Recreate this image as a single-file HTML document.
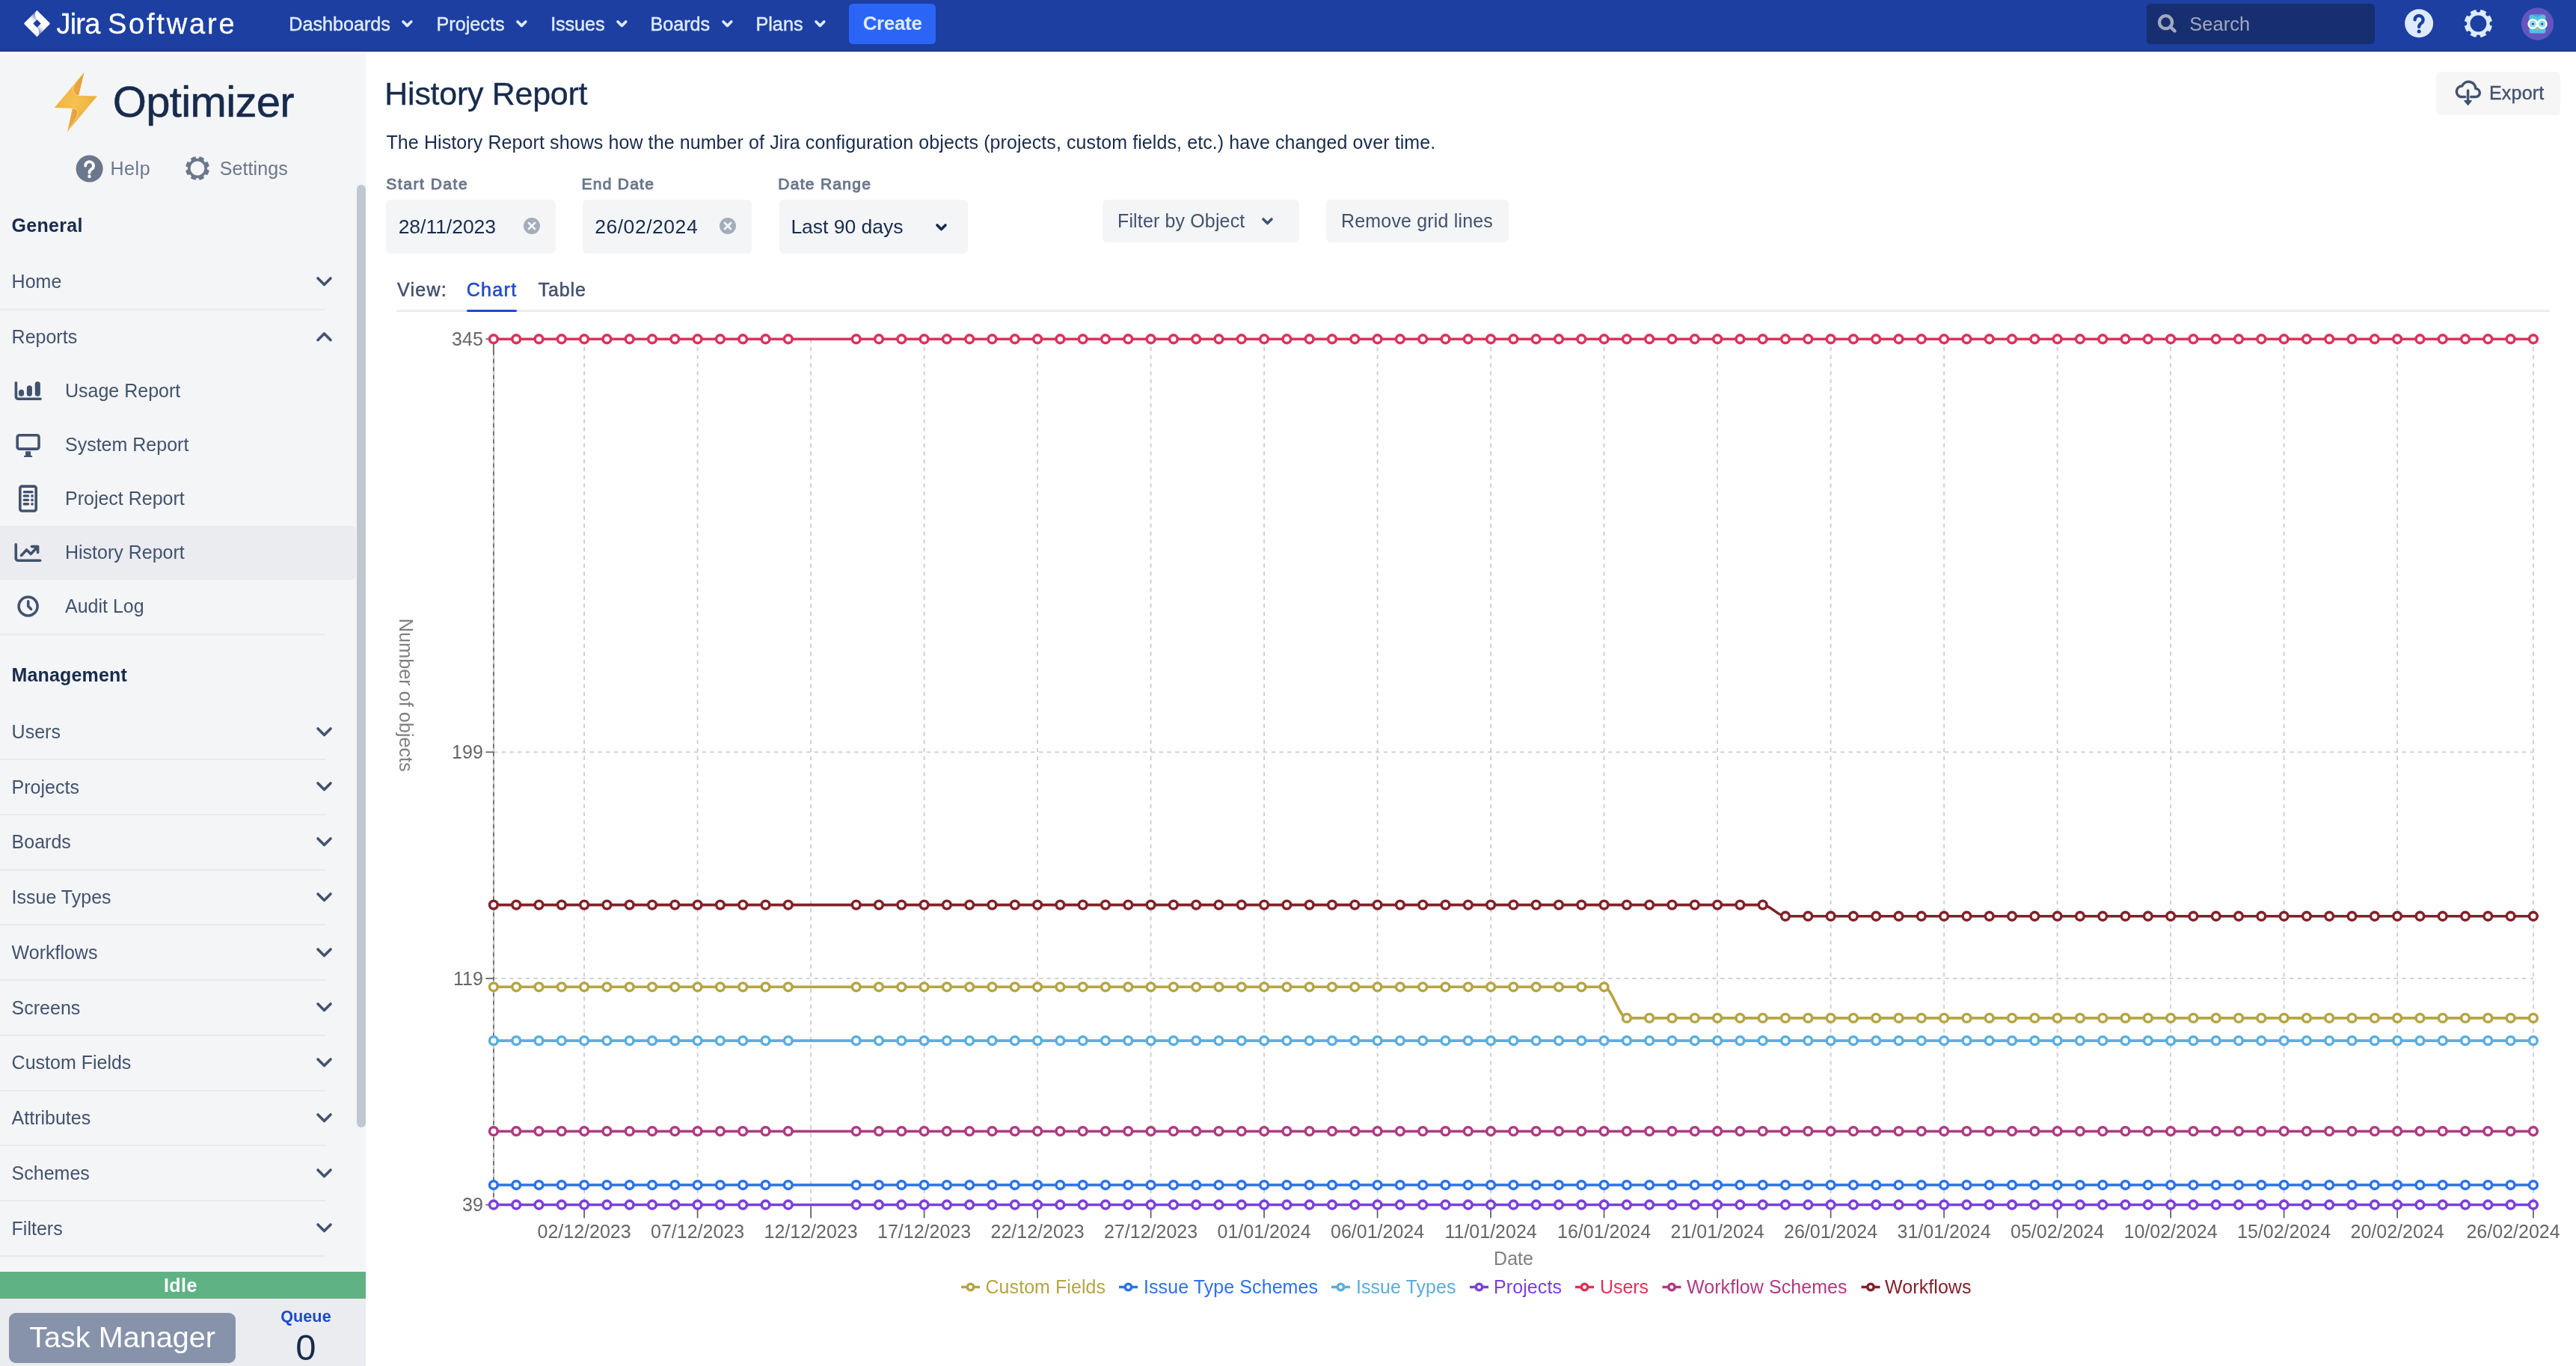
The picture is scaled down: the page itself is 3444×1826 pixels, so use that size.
<!DOCTYPE html>
<html lang="en"><head><meta charset="utf-8"><title>History Report - Optimizer - Jira</title>
<style>
html,body{margin:0;padding:0;background:#fff;}
body{width:3444px;height:1826px;overflow:hidden;position:relative;font-family:"Liberation Sans",Arial,Helvetica,sans-serif;}
#root{position:absolute;left:0;top:0;width:3444px;height:1826px;will-change:transform;}
.t{position:absolute;white-space:nowrap;}
.b{position:absolute;display:block;}
svg text{font-family:"Liberation Sans",Arial,Helvetica,sans-serif;}
</style></head><body><div id="root">
<div class="b" style="left:0px;top:0px;width:3444px;height:68px;background:#1c3fa1;"></div>
<div class="b" style="left:0px;top:68px;width:3444px;height:1px;background:#1b2a58;"></div>
<div class="b" style="left:0px;top:70px;width:489px;height:1756px;background:#f4f5f7;"></div>
<svg class="b" style="left:24px;top:6px;" width="52" height="52" viewBox="0 0 52 52">
<defs>
<linearGradient id="jg1" x1="16.6" y1="9.5" x2="11.6" y2="14.6" gradientUnits="userSpaceOnUse"><stop offset="0.1" stop-color="#1c3fa1" stop-opacity="0.55"/><stop offset="1" stop-color="#ffffff" stop-opacity="0"/></linearGradient>
<linearGradient id="jg2" x1="17.1" y1="22.2" x2="22.1" y2="17.2" gradientUnits="userSpaceOnUse"><stop offset="0.1" stop-color="#1c3fa1" stop-opacity="0.55"/><stop offset="1" stop-color="#ffffff" stop-opacity="0"/></linearGradient>
</defs>
<g transform="translate(25.5 25.5) scale(1.5) translate(-16.815 -15.88)">
<path d="M28.0313 15.2158L17.8063 4.99084L16.815 4L9.11812 11.6968L5.59877 15.2158C5.23194 15.5832 5.23194 16.1779 5.59877 16.5453L12.6307 23.5772L16.815 27.7611L24.5118 20.0643L24.631 19.9451L28.0313 16.5453C28.3981 16.1779 28.3981 15.5832 28.0313 15.2158ZM16.815 19.3931L13.3023 15.8806L16.815 12.368L20.3277 15.8806L16.815 19.3931Z" fill="#ffffff"/>
<path d="M16.815 12.368C14.5152 10.0679 14.504 6.34252 16.7899 4.02905L9.10303 11.7131L13.2869 15.897L16.815 12.368Z" fill="url(#jg1)"/>
<path d="M20.3371 15.8711L16.815 19.3931C17.9251 20.5026 18.5488 22.0078 18.5488 23.5773C18.5488 25.1468 17.9251 26.652 16.815 27.7614L24.5207 20.0557L20.3371 15.8711Z" fill="url(#jg2)"/>
</g></svg>
<div class="t " style="left:75.43px;top:8.83px;font-size:38px;line-height:46px;color:#ffffff;font-weight:400;letter-spacing:-0.770px;-webkit-text-stroke:0.3px #fff;">Jira</div>
<div class="t " style="left:143.89px;top:8.83px;font-size:38px;line-height:46px;color:#ffffff;font-weight:400;letter-spacing:2.817px;-webkit-text-stroke:0.3px #fff;">Software</div>
<div class="t " style="left:386.28px;top:17.27px;font-size:25.2px;line-height:30px;color:#deebff;font-weight:400;letter-spacing:-0.014px;-webkit-text-stroke:0.45px #deebff;">Dashboards</div>
<svg class="b" style="left:535.45px;top:25.0px;" width="18.8" height="13.4" viewBox="0 0 18.8 13.4"><path d="M4 4 L9.4 9.4 L14.8 4" fill="none" stroke="#deebff" stroke-width="3.7" stroke-linecap="round" stroke-linejoin="round"/></svg>
<div class="t " style="left:583.38px;top:17.27px;font-size:25.2px;line-height:30px;color:#deebff;font-weight:400;letter-spacing:0.032px;-webkit-text-stroke:0.45px #deebff;">Projects</div>
<svg class="b" style="left:687.95px;top:25.0px;" width="18.8" height="13.4" viewBox="0 0 18.8 13.4"><path d="M4 4 L9.4 9.4 L14.8 4" fill="none" stroke="#deebff" stroke-width="3.7" stroke-linecap="round" stroke-linejoin="round"/></svg>
<div class="t " style="left:736.13px;top:17.27px;font-size:25.2px;line-height:30px;color:#deebff;font-weight:400;letter-spacing:-0.076px;-webkit-text-stroke:0.45px #deebff;">Issues</div>
<svg class="b" style="left:822.25px;top:25.0px;" width="18.8" height="13.4" viewBox="0 0 18.8 13.4"><path d="M4 4 L9.4 9.4 L14.8 4" fill="none" stroke="#deebff" stroke-width="3.7" stroke-linecap="round" stroke-linejoin="round"/></svg>
<div class="t " style="left:869.38px;top:17.27px;font-size:25.2px;line-height:30px;color:#deebff;font-weight:400;letter-spacing:-0.017px;-webkit-text-stroke:0.45px #deebff;">Boards</div>
<svg class="b" style="left:963.0000000000001px;top:25.0px;" width="18.8" height="13.4" viewBox="0 0 18.8 13.4"><path d="M4 4 L9.4 9.4 L14.8 4" fill="none" stroke="#deebff" stroke-width="3.7" stroke-linecap="round" stroke-linejoin="round"/></svg>
<div class="t " style="left:1010.38px;top:17.27px;font-size:25.2px;line-height:30px;color:#deebff;font-weight:400;letter-spacing:0.050px;-webkit-text-stroke:0.45px #deebff;">Plans</div>
<svg class="b" style="left:1087.35px;top:25.0px;" width="18.8" height="13.4" viewBox="0 0 18.8 13.4"><path d="M4 4 L9.4 9.4 L14.8 4" fill="none" stroke="#deebff" stroke-width="3.7" stroke-linecap="round" stroke-linejoin="round"/></svg>
<div class="b" style="left:1135px;top:4.8px;width:116px;height:54.2px;background:#2b65f5;border-radius:5.5px;"></div>
<div class="t " style="left:1153.66px;top:15.79px;font-size:26px;line-height:31px;color:#deebff;font-weight:700;letter-spacing:-0.348px;">Create</div>
<div class="b" style="left:2870px;top:4.8px;width:305px;height:54.2px;background:#172e70;border-radius:5.5px;"></div>
<svg class="b" style="left:2882px;top:16px;" width="32" height="32" viewBox="0 0 32 32"><circle cx="13.5" cy="13.7" r="8.5" fill="none" stroke="#a0a9bf" stroke-width="4.3"/><path d="M19.8 20 L25.5 25.4" stroke="#a0a9bf" stroke-width="4.4" stroke-linecap="round"/></svg>
<div class="t " style="left:2927.16px;top:16.50px;font-size:25.4px;line-height:30px;color:#a0a9bf;font-weight:400;letter-spacing:0.101px;">Search</div>
<svg class="b" style="left:3212px;top:9px;" width="44" height="44" viewBox="0 0 44 44"><circle cx="22.1" cy="22.3" r="19" fill="#deebff"/><path d="M16.6 17.4 a5.5 5.5 0 1 1 8.5 4.6 c-2.2 1.5 -3 2.4 -3 4.9" fill="none" stroke="#1c3fa1" stroke-width="4.3" stroke-linecap="round"/><circle cx="22.1" cy="33" r="2.5" fill="#1c3fa1"/></svg>
<svg class="b" style="left:3290px;top:8px;" width="48" height="48" viewBox="0 0 48 48"><circle cx="23.4" cy="23.5" r="14.8" fill="none" stroke="#deebff" stroke-width="7.799999999999999"/><path d="M23.40 0.80 L23.40 5.50 M39.45 7.45 L36.13 10.77 M46.10 23.50 L41.40 23.50 M39.45 39.55 L36.13 36.23 M23.40 46.20 L23.40 41.50 M7.35 39.55 L10.67 36.23 M0.70 23.50 L5.40 23.50 M7.35 7.45 L10.67 10.77 " stroke="#1c3fa1" stroke-width="5.8" stroke-linecap="round" fill="none"/></svg>
<svg class="b" style="left:3368px;top:8px;" width="48" height="48" viewBox="0 0 48 48"><circle cx="24.5" cy="24" r="21.7" fill="#6554c0"/>
<path d="M13.6 13 l3 -1.6 h15.8 l3 1.6 v20.5 a3 3 0 0 1 -3 3 h-15.8 a3 3 0 0 1 -3 -3 z" fill="#4fc3e3"/>
<path d="M16.6 11.4 h15.8 l-7.9 3.4 z" fill="#3ea7c4"/>
<circle cx="18.3" cy="24" r="7" fill="#fff"/><circle cx="30.7" cy="24" r="7" fill="#fff"/>
<circle cx="18.3" cy="24" r="4.5" fill="#8ddcf0"/><circle cx="30.7" cy="24" r="4.5" fill="#8ddcf0"/>
<circle cx="18.3" cy="24" r="1.5" fill="#344a7c"/><circle cx="30.7" cy="24" r="1.5" fill="#344a7c"/>
<path d="M22.2 28.4 h4.6 l-2.3 4.6 z" fill="#f6a83b"/></svg>
<svg class="b" style="left:68px;top:92px;" width="70" height="90" viewBox="0 0 70 90"><defs><radialGradient id="bg1" cx="31.5" cy="44.2" r="34" gradientUnits="userSpaceOnUse"><stop offset="0" stop-color="#f6c350"/><stop offset="0.6" stop-color="#f1b545"/><stop offset="1" stop-color="#eaa83f"/></radialGradient>
<linearGradient id="bg2" x1="0" y1="0" x2="1" y2="0"><stop offset="0" stop-color="#ebac45"/><stop offset="1" stop-color="#e49c38"/></linearGradient></defs>
<path d="M44.3 5.1 L4.8 51.9 L29 52.7 L22.4 83.8 L61.9 36.6 L37 35.8 Z" fill="url(#bg1)"/>
<path d="M44.3 5.1 C37 14 29.5 21 29.3 27.4 C29.3 32 32.5 35.5 37 35.8 Z" fill="url(#bg2)"/>
<path d="M29 52.7 C33 53 36 56 35.9 58.2 C35.8 64 30 72 22.4 83.8 Z" fill="url(#bg2)"/>
<path d="M43 6.8 C37 14 29.5 21 29.3 27.4 C29.3 32 32.5 35.5 37 35.8 M29 52.7 C33 53 36 56 35.9 58.2 C35.8 64 30 72 24 81.5" fill="none" stroke="#fbe29a" stroke-width="0.8"/></svg>
<div class="t " style="left:150.79px;top:101.10px;font-size:58px;line-height:70px;color:#172b4d;font-weight:400;letter-spacing:-0.657px;-webkit-text-stroke:0.55px currentColor;">Optimizer</div>
<svg class="b" style="left:98px;top:204px;" width="44" height="44" viewBox="0 0 44 44"><circle cx="21.6" cy="21.5" r="18" fill="#6b778c"/><path d="M16.2 17.6 a5.4 5.4 0 1 1 8.2 4.6 c-2.1 1.4 -2.9 2.3 -2.9 4.6" fill="none" stroke="#fff" stroke-width="3.8" stroke-linecap="round"/><circle cx="21.5" cy="31.7" r="2.3" fill="#fff"/></svg>
<div class="t " style="left:147.40px;top:210.04px;font-size:25px;line-height:30px;color:#6b778c;font-weight:400;letter-spacing:0.575px;">Help</div>
<svg class="b" style="left:240px;top:201px;" width="48" height="48" viewBox="0 0 48 48"><circle cx="24" cy="24" r="12.7" fill="none" stroke="#6b778c" stroke-width="6.6"/><path d="M24.00 4.00 L24.00 8.60 M38.14 9.86 L34.89 13.11 M44.00 24.00 L39.40 24.00 M38.14 38.14 L34.89 34.89 M24.00 44.00 L24.00 39.40 M9.86 38.14 L13.11 34.89 M4.00 24.00 L8.60 24.00 M9.86 9.86 L13.11 13.11 " stroke="#f4f5f7" stroke-width="5" stroke-linecap="round" fill="none"/></svg>
<div class="t " style="left:293.68px;top:210.04px;font-size:25px;line-height:30px;color:#6b778c;font-weight:400;letter-spacing:0.104px;">Settings</div>
<div class="b" style="left:477px;top:247px;width:12px;height:1259.5px;background:#c1c7d0;border-radius:6px;"></div>
<div class="t " style="left:15.40px;top:286.34px;font-size:25px;line-height:30px;color:#172b4d;font-weight:700;letter-spacing:0.321px;">General</div>
<div class="t " style="left:15.40px;top:886.84px;font-size:25px;line-height:30px;color:#172b4d;font-weight:700;letter-spacing:0.178px;">Management</div>
<div class="t " style="left:15.60px;top:361.34px;font-size:25px;line-height:30px;color:#42526e;font-weight:400;">Home</div>
<svg class="b" style="left:420.5px;top:368.05px;" width="25" height="16.5" viewBox="0 0 25 16.5"><path d="M4 4 L12.5 12.5 L21 4" fill="none" stroke="#42526e" stroke-width="3.6" stroke-linecap="round" stroke-linejoin="round"/></svg>
<div class="b" style="left:0px;top:413px;width:434.5px;height:2px;background:#e9eaee;"></div>
<div class="t " style="left:15.60px;top:435.34px;font-size:25px;line-height:30px;color:#42526e;font-weight:400;">Reports</div>
<svg class="b" style="left:420.5px;top:442.05px;" width="25" height="16.5" viewBox="0 0 25 16.5"><path d="M4 12.5 L12.5 4 L21 12.5" fill="none" stroke="#42526e" stroke-width="3.6" stroke-linecap="round" stroke-linejoin="round"/></svg>
<div class="b" style="left:0px;top:703px;width:476px;height:72px;background:#ebecf0;border-radius:0 6px 6px 0;"></div>
<div class="t " style="left:87.00px;top:507.34px;font-size:25px;line-height:30px;color:#42526e;font-weight:400;">Usage Report</div>
<div class="t " style="left:87.00px;top:579.34px;font-size:25px;line-height:30px;color:#42526e;font-weight:400;">System Report</div>
<div class="t " style="left:87.00px;top:651.34px;font-size:25px;line-height:30px;color:#42526e;font-weight:400;">Project Report</div>
<div class="t " style="left:87.00px;top:723.34px;font-size:25px;line-height:30px;color:#42526e;font-weight:400;">History Report</div>
<div class="t " style="left:87.00px;top:795.34px;font-size:25px;line-height:30px;color:#42526e;font-weight:400;">Audit Log</div>
<svg class="b" style="left:14px;top:504px;" width="50" height="38" viewBox="0 0 50 38"><path d="M7.4 7.7 V26.3 a3 3 0 0 0 3 3 H40" fill="none" stroke="#42526e" stroke-width="3.6" stroke-linecap="round" stroke-linejoin="round"/><path d="M14.5 20.35 V22.25 M25.4 14.75 V22.25 M36.3 9.45 V22.25" fill="none" stroke="#42526e" stroke-width="7.1" stroke-linecap="round"/></svg>
<svg class="b" style="left:14px;top:574px;" width="50" height="42" viewBox="0 0 50 42"><rect x="9.2" y="7.8" width="28.8" height="18.3" rx="2.6" fill="none" stroke="#42526e" stroke-width="3.6" stroke-linecap="round" stroke-linejoin="round"/><path d="M20.1 29.3 h7 v5.6 h2 v2.1 h-11 v-2.1 h2 z" fill="#42526e"/></svg>
<svg class="b" style="left:14px;top:642px;" width="50" height="48" viewBox="0 0 50 48"><rect x="12.8" y="8.1" width="21.4" height="32.9" rx="2.6" fill="none" stroke="#42526e" stroke-width="3.6" stroke-linecap="round" stroke-linejoin="round"/><path d="M18.3 15.6 H29 M18.3 20.9 H23.5 M18.3 26.4 H23.5 M18.3 31.8 H23.5" stroke="#42526e" stroke-width="3.4" stroke-linecap="round" fill="none"/><circle cx="29" cy="20.9" r="1.85" fill="#42526e"/><circle cx="29" cy="26.4" r="1.85" fill="#42526e"/><circle cx="29" cy="31.8" r="1.85" fill="#42526e"/></svg>
<svg class="b" style="left:14px;top:720px;" width="50" height="38" viewBox="0 0 50 38"><path d="M7.25 7.8 V26.3 a3 3 0 0 0 3 3 H39.7" fill="none" stroke="#42526e" stroke-width="3.6" stroke-linecap="round" stroke-linejoin="round"/><path d="M14.5 22.4 L21.5 15 L27.2 20.5 L36 11.3 M28.5 10.6 H36.6 V18.5" fill="none" stroke="#42526e" stroke-width="3.6" stroke-linecap="round" stroke-linejoin="round"/></svg>
<svg class="b" style="left:14px;top:790px;" width="50" height="40" viewBox="0 0 50 40"><circle cx="23.6" cy="20.5" r="12.5" fill="none" stroke="#42526e" stroke-width="3.6" stroke-linecap="round" stroke-linejoin="round"/><path d="M23.7 13.8 V20.3 L27.6 24.3" fill="none" stroke="#42526e" stroke-width="3.6" stroke-linecap="round" stroke-linejoin="round"/></svg>
<div class="b" style="left:0px;top:846.5px;width:434.5px;height:2.0px;background:#e9eaee;"></div>
<div class="t " style="left:15.60px;top:962.84px;font-size:25px;line-height:30px;color:#42526e;font-weight:400;">Users</div>
<svg class="b" style="left:420.5px;top:969.65px;" width="25" height="16.5" viewBox="0 0 25 16.5"><path d="M4 4 L12.5 12.5 L21 4" fill="none" stroke="#42526e" stroke-width="3.6" stroke-linecap="round" stroke-linejoin="round"/></svg>
<div class="b" style="left:0px;top:1014.0px;width:434.5px;height:2.0px;background:#e9eaee;"></div>
<div class="t " style="left:15.60px;top:1036.59px;font-size:25px;line-height:30px;color:#42526e;font-weight:400;">Projects</div>
<svg class="b" style="left:420.5px;top:1043.4px;" width="25" height="16.5" viewBox="0 0 25 16.5"><path d="M4 4 L12.5 12.5 L21 4" fill="none" stroke="#42526e" stroke-width="3.6" stroke-linecap="round" stroke-linejoin="round"/></svg>
<div class="b" style="left:0px;top:1087.75px;width:434.5px;height:2.0px;background:#e9eaee;"></div>
<div class="t " style="left:15.60px;top:1110.34px;font-size:25px;line-height:30px;color:#42526e;font-weight:400;">Boards</div>
<svg class="b" style="left:420.5px;top:1117.15px;" width="25" height="16.5" viewBox="0 0 25 16.5"><path d="M4 4 L12.5 12.5 L21 4" fill="none" stroke="#42526e" stroke-width="3.6" stroke-linecap="round" stroke-linejoin="round"/></svg>
<div class="b" style="left:0px;top:1161.5px;width:434.5px;height:2.0px;background:#e9eaee;"></div>
<div class="t " style="left:15.60px;top:1184.09px;font-size:25px;line-height:30px;color:#42526e;font-weight:400;">Issue Types</div>
<svg class="b" style="left:420.5px;top:1190.9px;" width="25" height="16.5" viewBox="0 0 25 16.5"><path d="M4 4 L12.5 12.5 L21 4" fill="none" stroke="#42526e" stroke-width="3.6" stroke-linecap="round" stroke-linejoin="round"/></svg>
<div class="b" style="left:0px;top:1235.25px;width:434.5px;height:2.0px;background:#e9eaee;"></div>
<div class="t " style="left:15.60px;top:1257.84px;font-size:25px;line-height:30px;color:#42526e;font-weight:400;">Workflows</div>
<svg class="b" style="left:420.5px;top:1264.65px;" width="25" height="16.5" viewBox="0 0 25 16.5"><path d="M4 4 L12.5 12.5 L21 4" fill="none" stroke="#42526e" stroke-width="3.6" stroke-linecap="round" stroke-linejoin="round"/></svg>
<div class="b" style="left:0px;top:1309.0px;width:434.5px;height:2.0px;background:#e9eaee;"></div>
<div class="t " style="left:15.60px;top:1331.59px;font-size:25px;line-height:30px;color:#42526e;font-weight:400;">Screens</div>
<svg class="b" style="left:420.5px;top:1338.4px;" width="25" height="16.5" viewBox="0 0 25 16.5"><path d="M4 4 L12.5 12.5 L21 4" fill="none" stroke="#42526e" stroke-width="3.6" stroke-linecap="round" stroke-linejoin="round"/></svg>
<div class="b" style="left:0px;top:1382.75px;width:434.5px;height:2.0px;background:#e9eaee;"></div>
<div class="t " style="left:15.60px;top:1405.34px;font-size:25px;line-height:30px;color:#42526e;font-weight:400;">Custom Fields</div>
<svg class="b" style="left:420.5px;top:1412.15px;" width="25" height="16.5" viewBox="0 0 25 16.5"><path d="M4 4 L12.5 12.5 L21 4" fill="none" stroke="#42526e" stroke-width="3.6" stroke-linecap="round" stroke-linejoin="round"/></svg>
<div class="b" style="left:0px;top:1456.5px;width:434.5px;height:2.0px;background:#e9eaee;"></div>
<div class="t " style="left:15.60px;top:1479.09px;font-size:25px;line-height:30px;color:#42526e;font-weight:400;">Attributes</div>
<svg class="b" style="left:420.5px;top:1485.9px;" width="25" height="16.5" viewBox="0 0 25 16.5"><path d="M4 4 L12.5 12.5 L21 4" fill="none" stroke="#42526e" stroke-width="3.6" stroke-linecap="round" stroke-linejoin="round"/></svg>
<div class="b" style="left:0px;top:1530.25px;width:434.5px;height:2.0px;background:#e9eaee;"></div>
<div class="t " style="left:15.60px;top:1552.84px;font-size:25px;line-height:30px;color:#42526e;font-weight:400;">Schemes</div>
<svg class="b" style="left:420.5px;top:1559.65px;" width="25" height="16.5" viewBox="0 0 25 16.5"><path d="M4 4 L12.5 12.5 L21 4" fill="none" stroke="#42526e" stroke-width="3.6" stroke-linecap="round" stroke-linejoin="round"/></svg>
<div class="b" style="left:0px;top:1604.0px;width:434.5px;height:2.0px;background:#e9eaee;"></div>
<div class="t " style="left:15.60px;top:1626.59px;font-size:25px;line-height:30px;color:#42526e;font-weight:400;">Filters</div>
<svg class="b" style="left:420.5px;top:1633.4px;" width="25" height="16.5" viewBox="0 0 25 16.5"><path d="M4 4 L12.5 12.5 L21 4" fill="none" stroke="#42526e" stroke-width="3.6" stroke-linecap="round" stroke-linejoin="round"/></svg>
<div class="b" style="left:0px;top:1677.75px;width:434.5px;height:2.0px;background:#e9eaee;"></div>
<div class="b" style="left:0px;top:1699.5px;width:489px;height:36.5px;background:#5fb283;"></div>
<div class="t " style="left:218.88px;top:1702.84px;font-size:25px;line-height:30px;color:#ffffff;font-weight:700;letter-spacing:0.458px;">Idle</div>
<div class="b" style="left:0px;top:1736px;width:489px;height:90px;background:#ebecf0;"></div>
<div class="b" style="left:12px;top:1754.5px;width:302.5px;height:67.0px;background:#8793ab;border-radius:9px;"></div>
<div class="t " style="left:39.21px;top:1764.31px;font-size:39.5px;line-height:47px;color:#ffffff;font-weight:400;letter-spacing:0.057px;">Task Manager</div>
<div class="t " style="left:375.14px;top:1746.82px;font-size:21.6px;line-height:26px;color:#1c4bc9;font-weight:700;letter-spacing:0.084px;">Queue</div>
<div class="t " style="left:395.34px;top:1771.52px;font-size:49px;line-height:59px;color:#172b4d;font-weight:400;">0</div>
<div class="t " style="left:514.37px;top:99.84px;font-size:42.9px;line-height:51px;color:#172b4d;font-weight:400;letter-spacing:-0.237px;-webkit-text-stroke:0.35px currentColor;">History Report</div>
<div class="t " style="left:516.50px;top:175.34px;font-size:25px;line-height:30px;color:#172b4d;font-weight:400;letter-spacing:0.095px;">The History Report shows how the number of Jira configuration objects (projects, custom fields, etc.) have changed over time.</div>
<div class="b" style="left:3257px;top:96px;width:165.80000000000018px;height:57.69999999999999px;background:#f6f6f7;border-radius:5.5px;"></div>
<svg class="b" style="left:3276px;top:104px;" width="46" height="42" viewBox="0 0 46 42"><path d="M19.5 25.6 H13.8 A7.5 7.5 0 0 1 15.8 10.9 A9.4 9.4 0 0 1 33.8 14.6 A5.5 5.5 0 0 1 33.8 25.6 H27.7" fill="none" stroke="#42526e" stroke-width="3.5" stroke-linecap="round" stroke-linejoin="round"/><path d="M23.55 17 V32" fill="none" stroke="#42526e" stroke-width="3.5" stroke-linecap="round"/><path d="M18.8 30.6 H28.3 L23.55 36.4 Z" fill="#42526e" stroke="#42526e" stroke-width="1.2" stroke-linejoin="round"/></svg>
<div class="t " style="left:3328.00px;top:108.94px;font-size:25px;line-height:30px;color:#42526e;font-weight:400;letter-spacing:0.200px;-webkit-text-stroke:0.4px currentColor;">Export</div>
<div class="t " style="left:516.35px;top:232.82px;font-size:21px;line-height:25px;color:#6b778c;font-weight:400;letter-spacing:1.521px;-webkit-text-stroke:0.95px currentColor;">Start Date</div>
<div class="t " style="left:777.62px;top:232.82px;font-size:21px;line-height:25px;color:#6b778c;font-weight:400;letter-spacing:1.236px;-webkit-text-stroke:0.95px currentColor;">End Date</div>
<div class="t " style="left:1040.32px;top:232.82px;font-size:21px;line-height:25px;color:#6b778c;font-weight:400;letter-spacing:1.276px;-webkit-text-stroke:0.95px currentColor;">Date Range</div>
<div class="b" style="left:516px;top:267px;width:226.5px;height:71.5px;background:#f4f5f7;border-radius:6px;"></div>
<div class="b" style="left:778.5px;top:267px;width:226.5px;height:71.5px;background:#f4f5f7;border-radius:6px;"></div>
<div class="b" style="left:1042px;top:267px;width:252px;height:71.5px;background:#f4f5f7;border-radius:6px;"></div>
<div class="t " style="left:532.67px;top:286.82px;font-size:26.5px;line-height:32px;color:#172b4d;font-weight:400;letter-spacing:-0.029px;">28/11/2023</div>
<div class="t " style="left:795.17px;top:286.82px;font-size:26.5px;line-height:32px;color:#172b4d;font-weight:400;letter-spacing:0.539px;">26/02/2024</div>
<div class="t " style="left:1057.38px;top:286.82px;font-size:26.5px;line-height:32px;color:#172b4d;font-weight:400;letter-spacing:-0.019px;">Last 90 days</div>
<svg class="b" style="left:698px;top:289px;" width="26" height="26" viewBox="0 0 26 26"><circle cx="13" cy="13" r="11" fill="#a5adba"/><path d="M9 9 L17 17 M17 9 L9 17" stroke="#f4f5f7" stroke-width="2.8" stroke-linecap="round"/></svg>
<svg class="b" style="left:959.6px;top:289px;" width="26" height="26" viewBox="0 0 26 26"><circle cx="13" cy="13" r="11" fill="#a5adba"/><path d="M9 9 L17 17 M17 9 L9 17" stroke="#f4f5f7" stroke-width="2.8" stroke-linecap="round"/></svg>
<svg class="b" style="left:1249.3px;top:297.05px;" width="19" height="13.5" viewBox="0 0 19 13.5"><path d="M4 4 L9.5 9.5 L15 4" fill="none" stroke="#172b4d" stroke-width="3.6" stroke-linecap="round" stroke-linejoin="round"/></svg>
<div class="b" style="left:1474px;top:267px;width:262.5px;height:56.5px;background:#f4f5f7;border-radius:6px;"></div>
<div class="t " style="left:1494.00px;top:279.84px;font-size:25px;line-height:30px;color:#42526e;font-weight:400;letter-spacing:0.142px;">Filter by Object</div>
<svg class="b" style="left:1684.5px;top:288.75px;" width="19" height="13.5" viewBox="0 0 19 13.5"><path d="M4 4 L9.5 9.5 L15 4" fill="none" stroke="#42526e" stroke-width="3.6" stroke-linecap="round" stroke-linejoin="round"/></svg>
<div class="b" style="left:1773px;top:267px;width:243.5px;height:56.5px;background:#f4f5f7;border-radius:6px;"></div>
<div class="t " style="left:1793.00px;top:279.84px;font-size:25px;line-height:30px;color:#42526e;font-weight:400;letter-spacing:0.172px;">Remove grid lines</div>
<div class="b" style="left:530px;top:414px;width:2879px;height:3px;background:#ebecf0;border-radius:1.5px;"></div>
<div class="b" style="left:624px;top:414px;width:67px;height:3px;background:#1c4bc9;border-radius:1.5px;"></div>
<div class="t " style="left:530.88px;top:372.34px;font-size:25px;line-height:30px;color:#42526e;font-weight:400;letter-spacing:1.281px;-webkit-text-stroke:0.55px currentColor;">View:</div>
<div class="t " style="left:623.75px;top:372.34px;font-size:25px;line-height:30px;color:#1c4bc9;font-weight:400;letter-spacing:1.312px;-webkit-text-stroke:0.55px currentColor;">Chart</div>
<div class="t " style="left:719.50px;top:372.34px;font-size:25px;line-height:30px;color:#42526e;font-weight:400;letter-spacing:0.938px;-webkit-text-stroke:0.55px currentColor;">Table</div>
<svg class="b" style="left:488px;top:420px;will-change:transform;" width="2956" height="1406" viewBox="488 420 2956 1406"><line x1="781.10" y1="453.25" x2="781.10" y2="1610.5" stroke="#cccccc" stroke-width="1.8" stroke-dasharray="5.36 5.36"/>
<line x1="932.60" y1="453.25" x2="932.60" y2="1610.5" stroke="#cccccc" stroke-width="1.8" stroke-dasharray="5.36 5.36"/>
<line x1="1084.10" y1="453.25" x2="1084.10" y2="1610.5" stroke="#cccccc" stroke-width="1.8" stroke-dasharray="5.36 5.36"/>
<line x1="1235.60" y1="453.25" x2="1235.60" y2="1610.5" stroke="#cccccc" stroke-width="1.8" stroke-dasharray="5.36 5.36"/>
<line x1="1387.10" y1="453.25" x2="1387.10" y2="1610.5" stroke="#cccccc" stroke-width="1.8" stroke-dasharray="5.36 5.36"/>
<line x1="1538.60" y1="453.25" x2="1538.60" y2="1610.5" stroke="#cccccc" stroke-width="1.8" stroke-dasharray="5.36 5.36"/>
<line x1="1690.10" y1="453.25" x2="1690.10" y2="1610.5" stroke="#cccccc" stroke-width="1.8" stroke-dasharray="5.36 5.36"/>
<line x1="1841.60" y1="453.25" x2="1841.60" y2="1610.5" stroke="#cccccc" stroke-width="1.8" stroke-dasharray="5.36 5.36"/>
<line x1="1993.10" y1="453.25" x2="1993.10" y2="1610.5" stroke="#cccccc" stroke-width="1.8" stroke-dasharray="5.36 5.36"/>
<line x1="2144.60" y1="453.25" x2="2144.60" y2="1610.5" stroke="#cccccc" stroke-width="1.8" stroke-dasharray="5.36 5.36"/>
<line x1="2296.10" y1="453.25" x2="2296.10" y2="1610.5" stroke="#cccccc" stroke-width="1.8" stroke-dasharray="5.36 5.36"/>
<line x1="2447.60" y1="453.25" x2="2447.60" y2="1610.5" stroke="#cccccc" stroke-width="1.8" stroke-dasharray="5.36 5.36"/>
<line x1="2599.10" y1="453.25" x2="2599.10" y2="1610.5" stroke="#cccccc" stroke-width="1.8" stroke-dasharray="5.36 5.36"/>
<line x1="2750.60" y1="453.25" x2="2750.60" y2="1610.5" stroke="#cccccc" stroke-width="1.8" stroke-dasharray="5.36 5.36"/>
<line x1="2902.10" y1="453.25" x2="2902.10" y2="1610.5" stroke="#cccccc" stroke-width="1.8" stroke-dasharray="5.36 5.36"/>
<line x1="3053.60" y1="453.25" x2="3053.60" y2="1610.5" stroke="#cccccc" stroke-width="1.8" stroke-dasharray="5.36 5.36"/>
<line x1="3205.10" y1="453.25" x2="3205.10" y2="1610.5" stroke="#cccccc" stroke-width="1.8" stroke-dasharray="5.36 5.36"/>
<line x1="3386.90" y1="453.25" x2="3386.90" y2="1610.5" stroke="#cccccc" stroke-width="1.8" stroke-dasharray="5.36 5.36"/>
<line x1="659.9" y1="453.25" x2="3386.9" y2="453.25" stroke="#cccccc" stroke-width="1.8" stroke-dasharray="5.36 5.36"/>
<line x1="659.9" y1="1005.40" x2="3386.9" y2="1005.40" stroke="#cccccc" stroke-width="1.8" stroke-dasharray="5.36 5.36"/>
<line x1="659.9" y1="1307.95" x2="3386.9" y2="1307.95" stroke="#cccccc" stroke-width="1.8" stroke-dasharray="5.36 5.36"/>
<line x1="659.9" y1="1610.50" x2="3386.9" y2="1610.50" stroke="#cccccc" stroke-width="1.8" stroke-dasharray="5.36 5.36"/>
<line x1="659.9" y1="453.25" x2="659.9" y2="1610.5" stroke="#666666" stroke-width="1.8"/>
<line x1="659.9" y1="474.69" x2="659.9" y2="1610.5" stroke="#cccccc" stroke-width="1.8" stroke-dasharray="5.36 5.36"/>
<line x1="649.4" y1="453.25" x2="659.9" y2="453.25" stroke="#666666" stroke-width="1.8"/>
<text x="645.8" y="462.05" text-anchor="end" font-size="25" fill="#666666">345</text>
<line x1="649.4" y1="1005.40" x2="659.9" y2="1005.40" stroke="#666666" stroke-width="1.8"/>
<text x="645.8" y="1014.20" text-anchor="end" font-size="25" fill="#666666">199</text>
<line x1="649.4" y1="1307.95" x2="659.9" y2="1307.95" stroke="#666666" stroke-width="1.8"/>
<text x="645.8" y="1316.75" text-anchor="end" font-size="25" fill="#666666">119</text>
<line x1="649.4" y1="1610.50" x2="659.9" y2="1610.50" stroke="#666666" stroke-width="1.8"/>
<text x="645.8" y="1619.30" text-anchor="end" font-size="25" fill="#666666">39</text>
<line x1="781.10" y1="1610.5" x2="781.10" y2="1628.3" stroke="#666666" stroke-width="1.8"/>
<text x="781.10" y="1655" text-anchor="middle" font-size="25" fill="#666666">02/12/2023</text>
<line x1="932.60" y1="1610.5" x2="932.60" y2="1628.3" stroke="#666666" stroke-width="1.8"/>
<text x="932.60" y="1655" text-anchor="middle" font-size="25" fill="#666666">07/12/2023</text>
<line x1="1084.10" y1="1610.5" x2="1084.10" y2="1628.3" stroke="#666666" stroke-width="1.8"/>
<text x="1084.10" y="1655" text-anchor="middle" font-size="25" fill="#666666">12/12/2023</text>
<line x1="1235.60" y1="1610.5" x2="1235.60" y2="1628.3" stroke="#666666" stroke-width="1.8"/>
<text x="1235.60" y="1655" text-anchor="middle" font-size="25" fill="#666666">17/12/2023</text>
<line x1="1387.10" y1="1610.5" x2="1387.10" y2="1628.3" stroke="#666666" stroke-width="1.8"/>
<text x="1387.10" y="1655" text-anchor="middle" font-size="25" fill="#666666">22/12/2023</text>
<line x1="1538.60" y1="1610.5" x2="1538.60" y2="1628.3" stroke="#666666" stroke-width="1.8"/>
<text x="1538.60" y="1655" text-anchor="middle" font-size="25" fill="#666666">27/12/2023</text>
<line x1="1690.10" y1="1610.5" x2="1690.10" y2="1628.3" stroke="#666666" stroke-width="1.8"/>
<text x="1690.10" y="1655" text-anchor="middle" font-size="25" fill="#666666">01/01/2024</text>
<line x1="1841.60" y1="1610.5" x2="1841.60" y2="1628.3" stroke="#666666" stroke-width="1.8"/>
<text x="1841.60" y="1655" text-anchor="middle" font-size="25" fill="#666666">06/01/2024</text>
<line x1="1993.10" y1="1610.5" x2="1993.10" y2="1628.3" stroke="#666666" stroke-width="1.8"/>
<text x="1993.10" y="1655" text-anchor="middle" font-size="25" fill="#666666">11/01/2024</text>
<line x1="2144.60" y1="1610.5" x2="2144.60" y2="1628.3" stroke="#666666" stroke-width="1.8"/>
<text x="2144.60" y="1655" text-anchor="middle" font-size="25" fill="#666666">16/01/2024</text>
<line x1="2296.10" y1="1610.5" x2="2296.10" y2="1628.3" stroke="#666666" stroke-width="1.8"/>
<text x="2296.10" y="1655" text-anchor="middle" font-size="25" fill="#666666">21/01/2024</text>
<line x1="2447.60" y1="1610.5" x2="2447.60" y2="1628.3" stroke="#666666" stroke-width="1.8"/>
<text x="2447.60" y="1655" text-anchor="middle" font-size="25" fill="#666666">26/01/2024</text>
<line x1="2599.10" y1="1610.5" x2="2599.10" y2="1628.3" stroke="#666666" stroke-width="1.8"/>
<text x="2599.10" y="1655" text-anchor="middle" font-size="25" fill="#666666">31/01/2024</text>
<line x1="2750.60" y1="1610.5" x2="2750.60" y2="1628.3" stroke="#666666" stroke-width="1.8"/>
<text x="2750.60" y="1655" text-anchor="middle" font-size="25" fill="#666666">05/02/2024</text>
<line x1="2902.10" y1="1610.5" x2="2902.10" y2="1628.3" stroke="#666666" stroke-width="1.8"/>
<text x="2902.10" y="1655" text-anchor="middle" font-size="25" fill="#666666">10/02/2024</text>
<line x1="3053.60" y1="1610.5" x2="3053.60" y2="1628.3" stroke="#666666" stroke-width="1.8"/>
<text x="3053.60" y="1655" text-anchor="middle" font-size="25" fill="#666666">15/02/2024</text>
<line x1="3205.10" y1="1610.5" x2="3205.10" y2="1628.3" stroke="#666666" stroke-width="1.8"/>
<text x="3205.10" y="1655" text-anchor="middle" font-size="25" fill="#666666">20/02/2024</text>
<line x1="3386.90" y1="1610.5" x2="3386.90" y2="1628.3" stroke="#666666" stroke-width="1.8"/>
<text x="3422.6" y="1655" text-anchor="end" font-size="25" fill="#666666">26/02/2024</text>
<text x="2023.5" y="1690.8" text-anchor="middle" font-size="25" fill="#808080">Date</text>
<text transform="translate(534.2 929.3) rotate(90)" text-anchor="middle" font-size="25.25" fill="#808080">Number of objects</text>
<path d="M659.90 1319.30 H2144.60 C2154.70 1319.30 2164.80 1360.90 2174.90 1360.90 H3386.90" fill="none" stroke="#b5a544" stroke-width="3.57" stroke-linejoin="round"/>
<circle cx="659.90" cy="1319.30" r="5.36" fill="#fff" stroke="#b5a544" stroke-width="3.57"/>
<circle cx="690.20" cy="1319.30" r="5.36" fill="#fff" stroke="#b5a544" stroke-width="3.57"/>
<circle cx="720.50" cy="1319.30" r="5.36" fill="#fff" stroke="#b5a544" stroke-width="3.57"/>
<circle cx="750.80" cy="1319.30" r="5.36" fill="#fff" stroke="#b5a544" stroke-width="3.57"/>
<circle cx="781.10" cy="1319.30" r="5.36" fill="#fff" stroke="#b5a544" stroke-width="3.57"/>
<circle cx="811.40" cy="1319.30" r="5.36" fill="#fff" stroke="#b5a544" stroke-width="3.57"/>
<circle cx="841.70" cy="1319.30" r="5.36" fill="#fff" stroke="#b5a544" stroke-width="3.57"/>
<circle cx="872.00" cy="1319.30" r="5.36" fill="#fff" stroke="#b5a544" stroke-width="3.57"/>
<circle cx="902.30" cy="1319.30" r="5.36" fill="#fff" stroke="#b5a544" stroke-width="3.57"/>
<circle cx="932.60" cy="1319.30" r="5.36" fill="#fff" stroke="#b5a544" stroke-width="3.57"/>
<circle cx="962.90" cy="1319.30" r="5.36" fill="#fff" stroke="#b5a544" stroke-width="3.57"/>
<circle cx="993.20" cy="1319.30" r="5.36" fill="#fff" stroke="#b5a544" stroke-width="3.57"/>
<circle cx="1023.50" cy="1319.30" r="5.36" fill="#fff" stroke="#b5a544" stroke-width="3.57"/>
<circle cx="1053.80" cy="1319.30" r="5.36" fill="#fff" stroke="#b5a544" stroke-width="3.57"/>
<circle cx="1144.70" cy="1319.30" r="5.36" fill="#fff" stroke="#b5a544" stroke-width="3.57"/>
<circle cx="1175.00" cy="1319.30" r="5.36" fill="#fff" stroke="#b5a544" stroke-width="3.57"/>
<circle cx="1205.30" cy="1319.30" r="5.36" fill="#fff" stroke="#b5a544" stroke-width="3.57"/>
<circle cx="1235.60" cy="1319.30" r="5.36" fill="#fff" stroke="#b5a544" stroke-width="3.57"/>
<circle cx="1265.90" cy="1319.30" r="5.36" fill="#fff" stroke="#b5a544" stroke-width="3.57"/>
<circle cx="1296.20" cy="1319.30" r="5.36" fill="#fff" stroke="#b5a544" stroke-width="3.57"/>
<circle cx="1326.50" cy="1319.30" r="5.36" fill="#fff" stroke="#b5a544" stroke-width="3.57"/>
<circle cx="1356.80" cy="1319.30" r="5.36" fill="#fff" stroke="#b5a544" stroke-width="3.57"/>
<circle cx="1387.10" cy="1319.30" r="5.36" fill="#fff" stroke="#b5a544" stroke-width="3.57"/>
<circle cx="1417.40" cy="1319.30" r="5.36" fill="#fff" stroke="#b5a544" stroke-width="3.57"/>
<circle cx="1447.70" cy="1319.30" r="5.36" fill="#fff" stroke="#b5a544" stroke-width="3.57"/>
<circle cx="1478.00" cy="1319.30" r="5.36" fill="#fff" stroke="#b5a544" stroke-width="3.57"/>
<circle cx="1508.30" cy="1319.30" r="5.36" fill="#fff" stroke="#b5a544" stroke-width="3.57"/>
<circle cx="1538.60" cy="1319.30" r="5.36" fill="#fff" stroke="#b5a544" stroke-width="3.57"/>
<circle cx="1568.90" cy="1319.30" r="5.36" fill="#fff" stroke="#b5a544" stroke-width="3.57"/>
<circle cx="1599.20" cy="1319.30" r="5.36" fill="#fff" stroke="#b5a544" stroke-width="3.57"/>
<circle cx="1629.50" cy="1319.30" r="5.36" fill="#fff" stroke="#b5a544" stroke-width="3.57"/>
<circle cx="1659.80" cy="1319.30" r="5.36" fill="#fff" stroke="#b5a544" stroke-width="3.57"/>
<circle cx="1690.10" cy="1319.30" r="5.36" fill="#fff" stroke="#b5a544" stroke-width="3.57"/>
<circle cx="1720.40" cy="1319.30" r="5.36" fill="#fff" stroke="#b5a544" stroke-width="3.57"/>
<circle cx="1750.70" cy="1319.30" r="5.36" fill="#fff" stroke="#b5a544" stroke-width="3.57"/>
<circle cx="1781.00" cy="1319.30" r="5.36" fill="#fff" stroke="#b5a544" stroke-width="3.57"/>
<circle cx="1811.30" cy="1319.30" r="5.36" fill="#fff" stroke="#b5a544" stroke-width="3.57"/>
<circle cx="1841.60" cy="1319.30" r="5.36" fill="#fff" stroke="#b5a544" stroke-width="3.57"/>
<circle cx="1871.90" cy="1319.30" r="5.36" fill="#fff" stroke="#b5a544" stroke-width="3.57"/>
<circle cx="1902.20" cy="1319.30" r="5.36" fill="#fff" stroke="#b5a544" stroke-width="3.57"/>
<circle cx="1932.50" cy="1319.30" r="5.36" fill="#fff" stroke="#b5a544" stroke-width="3.57"/>
<circle cx="1962.80" cy="1319.30" r="5.36" fill="#fff" stroke="#b5a544" stroke-width="3.57"/>
<circle cx="1993.10" cy="1319.30" r="5.36" fill="#fff" stroke="#b5a544" stroke-width="3.57"/>
<circle cx="2023.40" cy="1319.30" r="5.36" fill="#fff" stroke="#b5a544" stroke-width="3.57"/>
<circle cx="2053.70" cy="1319.30" r="5.36" fill="#fff" stroke="#b5a544" stroke-width="3.57"/>
<circle cx="2084.00" cy="1319.30" r="5.36" fill="#fff" stroke="#b5a544" stroke-width="3.57"/>
<circle cx="2114.30" cy="1319.30" r="5.36" fill="#fff" stroke="#b5a544" stroke-width="3.57"/>
<circle cx="2144.60" cy="1319.30" r="5.36" fill="#fff" stroke="#b5a544" stroke-width="3.57"/>
<circle cx="2174.90" cy="1360.90" r="5.36" fill="#fff" stroke="#b5a544" stroke-width="3.57"/>
<circle cx="2205.20" cy="1360.90" r="5.36" fill="#fff" stroke="#b5a544" stroke-width="3.57"/>
<circle cx="2235.50" cy="1360.90" r="5.36" fill="#fff" stroke="#b5a544" stroke-width="3.57"/>
<circle cx="2265.80" cy="1360.90" r="5.36" fill="#fff" stroke="#b5a544" stroke-width="3.57"/>
<circle cx="2296.10" cy="1360.90" r="5.36" fill="#fff" stroke="#b5a544" stroke-width="3.57"/>
<circle cx="2326.40" cy="1360.90" r="5.36" fill="#fff" stroke="#b5a544" stroke-width="3.57"/>
<circle cx="2356.70" cy="1360.90" r="5.36" fill="#fff" stroke="#b5a544" stroke-width="3.57"/>
<circle cx="2387.00" cy="1360.90" r="5.36" fill="#fff" stroke="#b5a544" stroke-width="3.57"/>
<circle cx="2417.30" cy="1360.90" r="5.36" fill="#fff" stroke="#b5a544" stroke-width="3.57"/>
<circle cx="2447.60" cy="1360.90" r="5.36" fill="#fff" stroke="#b5a544" stroke-width="3.57"/>
<circle cx="2477.90" cy="1360.90" r="5.36" fill="#fff" stroke="#b5a544" stroke-width="3.57"/>
<circle cx="2508.20" cy="1360.90" r="5.36" fill="#fff" stroke="#b5a544" stroke-width="3.57"/>
<circle cx="2538.50" cy="1360.90" r="5.36" fill="#fff" stroke="#b5a544" stroke-width="3.57"/>
<circle cx="2568.80" cy="1360.90" r="5.36" fill="#fff" stroke="#b5a544" stroke-width="3.57"/>
<circle cx="2599.10" cy="1360.90" r="5.36" fill="#fff" stroke="#b5a544" stroke-width="3.57"/>
<circle cx="2629.40" cy="1360.90" r="5.36" fill="#fff" stroke="#b5a544" stroke-width="3.57"/>
<circle cx="2659.70" cy="1360.90" r="5.36" fill="#fff" stroke="#b5a544" stroke-width="3.57"/>
<circle cx="2690.00" cy="1360.90" r="5.36" fill="#fff" stroke="#b5a544" stroke-width="3.57"/>
<circle cx="2720.30" cy="1360.90" r="5.36" fill="#fff" stroke="#b5a544" stroke-width="3.57"/>
<circle cx="2750.60" cy="1360.90" r="5.36" fill="#fff" stroke="#b5a544" stroke-width="3.57"/>
<circle cx="2780.90" cy="1360.90" r="5.36" fill="#fff" stroke="#b5a544" stroke-width="3.57"/>
<circle cx="2811.20" cy="1360.90" r="5.36" fill="#fff" stroke="#b5a544" stroke-width="3.57"/>
<circle cx="2841.50" cy="1360.90" r="5.36" fill="#fff" stroke="#b5a544" stroke-width="3.57"/>
<circle cx="2871.80" cy="1360.90" r="5.36" fill="#fff" stroke="#b5a544" stroke-width="3.57"/>
<circle cx="2902.10" cy="1360.90" r="5.36" fill="#fff" stroke="#b5a544" stroke-width="3.57"/>
<circle cx="2932.40" cy="1360.90" r="5.36" fill="#fff" stroke="#b5a544" stroke-width="3.57"/>
<circle cx="2962.70" cy="1360.90" r="5.36" fill="#fff" stroke="#b5a544" stroke-width="3.57"/>
<circle cx="2993.00" cy="1360.90" r="5.36" fill="#fff" stroke="#b5a544" stroke-width="3.57"/>
<circle cx="3023.30" cy="1360.90" r="5.36" fill="#fff" stroke="#b5a544" stroke-width="3.57"/>
<circle cx="3053.60" cy="1360.90" r="5.36" fill="#fff" stroke="#b5a544" stroke-width="3.57"/>
<circle cx="3083.90" cy="1360.90" r="5.36" fill="#fff" stroke="#b5a544" stroke-width="3.57"/>
<circle cx="3114.20" cy="1360.90" r="5.36" fill="#fff" stroke="#b5a544" stroke-width="3.57"/>
<circle cx="3144.50" cy="1360.90" r="5.36" fill="#fff" stroke="#b5a544" stroke-width="3.57"/>
<circle cx="3174.80" cy="1360.90" r="5.36" fill="#fff" stroke="#b5a544" stroke-width="3.57"/>
<circle cx="3205.10" cy="1360.90" r="5.36" fill="#fff" stroke="#b5a544" stroke-width="3.57"/>
<circle cx="3235.40" cy="1360.90" r="5.36" fill="#fff" stroke="#b5a544" stroke-width="3.57"/>
<circle cx="3265.70" cy="1360.90" r="5.36" fill="#fff" stroke="#b5a544" stroke-width="3.57"/>
<circle cx="3296.00" cy="1360.90" r="5.36" fill="#fff" stroke="#b5a544" stroke-width="3.57"/>
<circle cx="3326.30" cy="1360.90" r="5.36" fill="#fff" stroke="#b5a544" stroke-width="3.57"/>
<circle cx="3356.60" cy="1360.90" r="5.36" fill="#fff" stroke="#b5a544" stroke-width="3.57"/>
<circle cx="3386.90" cy="1360.90" r="5.36" fill="#fff" stroke="#b5a544" stroke-width="3.57"/>
<path d="M659.90 1584.03 H3386.90" fill="none" stroke="#2d72e8" stroke-width="3.57" stroke-linejoin="round"/>
<circle cx="659.90" cy="1584.03" r="5.36" fill="#fff" stroke="#2d72e8" stroke-width="3.57"/>
<circle cx="690.20" cy="1584.03" r="5.36" fill="#fff" stroke="#2d72e8" stroke-width="3.57"/>
<circle cx="720.50" cy="1584.03" r="5.36" fill="#fff" stroke="#2d72e8" stroke-width="3.57"/>
<circle cx="750.80" cy="1584.03" r="5.36" fill="#fff" stroke="#2d72e8" stroke-width="3.57"/>
<circle cx="781.10" cy="1584.03" r="5.36" fill="#fff" stroke="#2d72e8" stroke-width="3.57"/>
<circle cx="811.40" cy="1584.03" r="5.36" fill="#fff" stroke="#2d72e8" stroke-width="3.57"/>
<circle cx="841.70" cy="1584.03" r="5.36" fill="#fff" stroke="#2d72e8" stroke-width="3.57"/>
<circle cx="872.00" cy="1584.03" r="5.36" fill="#fff" stroke="#2d72e8" stroke-width="3.57"/>
<circle cx="902.30" cy="1584.03" r="5.36" fill="#fff" stroke="#2d72e8" stroke-width="3.57"/>
<circle cx="932.60" cy="1584.03" r="5.36" fill="#fff" stroke="#2d72e8" stroke-width="3.57"/>
<circle cx="962.90" cy="1584.03" r="5.36" fill="#fff" stroke="#2d72e8" stroke-width="3.57"/>
<circle cx="993.20" cy="1584.03" r="5.36" fill="#fff" stroke="#2d72e8" stroke-width="3.57"/>
<circle cx="1023.50" cy="1584.03" r="5.36" fill="#fff" stroke="#2d72e8" stroke-width="3.57"/>
<circle cx="1053.80" cy="1584.03" r="5.36" fill="#fff" stroke="#2d72e8" stroke-width="3.57"/>
<circle cx="1144.70" cy="1584.03" r="5.36" fill="#fff" stroke="#2d72e8" stroke-width="3.57"/>
<circle cx="1175.00" cy="1584.03" r="5.36" fill="#fff" stroke="#2d72e8" stroke-width="3.57"/>
<circle cx="1205.30" cy="1584.03" r="5.36" fill="#fff" stroke="#2d72e8" stroke-width="3.57"/>
<circle cx="1235.60" cy="1584.03" r="5.36" fill="#fff" stroke="#2d72e8" stroke-width="3.57"/>
<circle cx="1265.90" cy="1584.03" r="5.36" fill="#fff" stroke="#2d72e8" stroke-width="3.57"/>
<circle cx="1296.20" cy="1584.03" r="5.36" fill="#fff" stroke="#2d72e8" stroke-width="3.57"/>
<circle cx="1326.50" cy="1584.03" r="5.36" fill="#fff" stroke="#2d72e8" stroke-width="3.57"/>
<circle cx="1356.80" cy="1584.03" r="5.36" fill="#fff" stroke="#2d72e8" stroke-width="3.57"/>
<circle cx="1387.10" cy="1584.03" r="5.36" fill="#fff" stroke="#2d72e8" stroke-width="3.57"/>
<circle cx="1417.40" cy="1584.03" r="5.36" fill="#fff" stroke="#2d72e8" stroke-width="3.57"/>
<circle cx="1447.70" cy="1584.03" r="5.36" fill="#fff" stroke="#2d72e8" stroke-width="3.57"/>
<circle cx="1478.00" cy="1584.03" r="5.36" fill="#fff" stroke="#2d72e8" stroke-width="3.57"/>
<circle cx="1508.30" cy="1584.03" r="5.36" fill="#fff" stroke="#2d72e8" stroke-width="3.57"/>
<circle cx="1538.60" cy="1584.03" r="5.36" fill="#fff" stroke="#2d72e8" stroke-width="3.57"/>
<circle cx="1568.90" cy="1584.03" r="5.36" fill="#fff" stroke="#2d72e8" stroke-width="3.57"/>
<circle cx="1599.20" cy="1584.03" r="5.36" fill="#fff" stroke="#2d72e8" stroke-width="3.57"/>
<circle cx="1629.50" cy="1584.03" r="5.36" fill="#fff" stroke="#2d72e8" stroke-width="3.57"/>
<circle cx="1659.80" cy="1584.03" r="5.36" fill="#fff" stroke="#2d72e8" stroke-width="3.57"/>
<circle cx="1690.10" cy="1584.03" r="5.36" fill="#fff" stroke="#2d72e8" stroke-width="3.57"/>
<circle cx="1720.40" cy="1584.03" r="5.36" fill="#fff" stroke="#2d72e8" stroke-width="3.57"/>
<circle cx="1750.70" cy="1584.03" r="5.36" fill="#fff" stroke="#2d72e8" stroke-width="3.57"/>
<circle cx="1781.00" cy="1584.03" r="5.36" fill="#fff" stroke="#2d72e8" stroke-width="3.57"/>
<circle cx="1811.30" cy="1584.03" r="5.36" fill="#fff" stroke="#2d72e8" stroke-width="3.57"/>
<circle cx="1841.60" cy="1584.03" r="5.36" fill="#fff" stroke="#2d72e8" stroke-width="3.57"/>
<circle cx="1871.90" cy="1584.03" r="5.36" fill="#fff" stroke="#2d72e8" stroke-width="3.57"/>
<circle cx="1902.20" cy="1584.03" r="5.36" fill="#fff" stroke="#2d72e8" stroke-width="3.57"/>
<circle cx="1932.50" cy="1584.03" r="5.36" fill="#fff" stroke="#2d72e8" stroke-width="3.57"/>
<circle cx="1962.80" cy="1584.03" r="5.36" fill="#fff" stroke="#2d72e8" stroke-width="3.57"/>
<circle cx="1993.10" cy="1584.03" r="5.36" fill="#fff" stroke="#2d72e8" stroke-width="3.57"/>
<circle cx="2023.40" cy="1584.03" r="5.36" fill="#fff" stroke="#2d72e8" stroke-width="3.57"/>
<circle cx="2053.70" cy="1584.03" r="5.36" fill="#fff" stroke="#2d72e8" stroke-width="3.57"/>
<circle cx="2084.00" cy="1584.03" r="5.36" fill="#fff" stroke="#2d72e8" stroke-width="3.57"/>
<circle cx="2114.30" cy="1584.03" r="5.36" fill="#fff" stroke="#2d72e8" stroke-width="3.57"/>
<circle cx="2144.60" cy="1584.03" r="5.36" fill="#fff" stroke="#2d72e8" stroke-width="3.57"/>
<circle cx="2174.90" cy="1584.03" r="5.36" fill="#fff" stroke="#2d72e8" stroke-width="3.57"/>
<circle cx="2205.20" cy="1584.03" r="5.36" fill="#fff" stroke="#2d72e8" stroke-width="3.57"/>
<circle cx="2235.50" cy="1584.03" r="5.36" fill="#fff" stroke="#2d72e8" stroke-width="3.57"/>
<circle cx="2265.80" cy="1584.03" r="5.36" fill="#fff" stroke="#2d72e8" stroke-width="3.57"/>
<circle cx="2296.10" cy="1584.03" r="5.36" fill="#fff" stroke="#2d72e8" stroke-width="3.57"/>
<circle cx="2326.40" cy="1584.03" r="5.36" fill="#fff" stroke="#2d72e8" stroke-width="3.57"/>
<circle cx="2356.70" cy="1584.03" r="5.36" fill="#fff" stroke="#2d72e8" stroke-width="3.57"/>
<circle cx="2387.00" cy="1584.03" r="5.36" fill="#fff" stroke="#2d72e8" stroke-width="3.57"/>
<circle cx="2417.30" cy="1584.03" r="5.36" fill="#fff" stroke="#2d72e8" stroke-width="3.57"/>
<circle cx="2447.60" cy="1584.03" r="5.36" fill="#fff" stroke="#2d72e8" stroke-width="3.57"/>
<circle cx="2477.90" cy="1584.03" r="5.36" fill="#fff" stroke="#2d72e8" stroke-width="3.57"/>
<circle cx="2508.20" cy="1584.03" r="5.36" fill="#fff" stroke="#2d72e8" stroke-width="3.57"/>
<circle cx="2538.50" cy="1584.03" r="5.36" fill="#fff" stroke="#2d72e8" stroke-width="3.57"/>
<circle cx="2568.80" cy="1584.03" r="5.36" fill="#fff" stroke="#2d72e8" stroke-width="3.57"/>
<circle cx="2599.10" cy="1584.03" r="5.36" fill="#fff" stroke="#2d72e8" stroke-width="3.57"/>
<circle cx="2629.40" cy="1584.03" r="5.36" fill="#fff" stroke="#2d72e8" stroke-width="3.57"/>
<circle cx="2659.70" cy="1584.03" r="5.36" fill="#fff" stroke="#2d72e8" stroke-width="3.57"/>
<circle cx="2690.00" cy="1584.03" r="5.36" fill="#fff" stroke="#2d72e8" stroke-width="3.57"/>
<circle cx="2720.30" cy="1584.03" r="5.36" fill="#fff" stroke="#2d72e8" stroke-width="3.57"/>
<circle cx="2750.60" cy="1584.03" r="5.36" fill="#fff" stroke="#2d72e8" stroke-width="3.57"/>
<circle cx="2780.90" cy="1584.03" r="5.36" fill="#fff" stroke="#2d72e8" stroke-width="3.57"/>
<circle cx="2811.20" cy="1584.03" r="5.36" fill="#fff" stroke="#2d72e8" stroke-width="3.57"/>
<circle cx="2841.50" cy="1584.03" r="5.36" fill="#fff" stroke="#2d72e8" stroke-width="3.57"/>
<circle cx="2871.80" cy="1584.03" r="5.36" fill="#fff" stroke="#2d72e8" stroke-width="3.57"/>
<circle cx="2902.10" cy="1584.03" r="5.36" fill="#fff" stroke="#2d72e8" stroke-width="3.57"/>
<circle cx="2932.40" cy="1584.03" r="5.36" fill="#fff" stroke="#2d72e8" stroke-width="3.57"/>
<circle cx="2962.70" cy="1584.03" r="5.36" fill="#fff" stroke="#2d72e8" stroke-width="3.57"/>
<circle cx="2993.00" cy="1584.03" r="5.36" fill="#fff" stroke="#2d72e8" stroke-width="3.57"/>
<circle cx="3023.30" cy="1584.03" r="5.36" fill="#fff" stroke="#2d72e8" stroke-width="3.57"/>
<circle cx="3053.60" cy="1584.03" r="5.36" fill="#fff" stroke="#2d72e8" stroke-width="3.57"/>
<circle cx="3083.90" cy="1584.03" r="5.36" fill="#fff" stroke="#2d72e8" stroke-width="3.57"/>
<circle cx="3114.20" cy="1584.03" r="5.36" fill="#fff" stroke="#2d72e8" stroke-width="3.57"/>
<circle cx="3144.50" cy="1584.03" r="5.36" fill="#fff" stroke="#2d72e8" stroke-width="3.57"/>
<circle cx="3174.80" cy="1584.03" r="5.36" fill="#fff" stroke="#2d72e8" stroke-width="3.57"/>
<circle cx="3205.10" cy="1584.03" r="5.36" fill="#fff" stroke="#2d72e8" stroke-width="3.57"/>
<circle cx="3235.40" cy="1584.03" r="5.36" fill="#fff" stroke="#2d72e8" stroke-width="3.57"/>
<circle cx="3265.70" cy="1584.03" r="5.36" fill="#fff" stroke="#2d72e8" stroke-width="3.57"/>
<circle cx="3296.00" cy="1584.03" r="5.36" fill="#fff" stroke="#2d72e8" stroke-width="3.57"/>
<circle cx="3326.30" cy="1584.03" r="5.36" fill="#fff" stroke="#2d72e8" stroke-width="3.57"/>
<circle cx="3356.60" cy="1584.03" r="5.36" fill="#fff" stroke="#2d72e8" stroke-width="3.57"/>
<circle cx="3386.90" cy="1584.03" r="5.36" fill="#fff" stroke="#2d72e8" stroke-width="3.57"/>
<path d="M659.90 1391.15 H3386.90" fill="none" stroke="#5cadde" stroke-width="3.57" stroke-linejoin="round"/>
<circle cx="659.90" cy="1391.15" r="5.36" fill="#fff" stroke="#5cadde" stroke-width="3.57"/>
<circle cx="690.20" cy="1391.15" r="5.36" fill="#fff" stroke="#5cadde" stroke-width="3.57"/>
<circle cx="720.50" cy="1391.15" r="5.36" fill="#fff" stroke="#5cadde" stroke-width="3.57"/>
<circle cx="750.80" cy="1391.15" r="5.36" fill="#fff" stroke="#5cadde" stroke-width="3.57"/>
<circle cx="781.10" cy="1391.15" r="5.36" fill="#fff" stroke="#5cadde" stroke-width="3.57"/>
<circle cx="811.40" cy="1391.15" r="5.36" fill="#fff" stroke="#5cadde" stroke-width="3.57"/>
<circle cx="841.70" cy="1391.15" r="5.36" fill="#fff" stroke="#5cadde" stroke-width="3.57"/>
<circle cx="872.00" cy="1391.15" r="5.36" fill="#fff" stroke="#5cadde" stroke-width="3.57"/>
<circle cx="902.30" cy="1391.15" r="5.36" fill="#fff" stroke="#5cadde" stroke-width="3.57"/>
<circle cx="932.60" cy="1391.15" r="5.36" fill="#fff" stroke="#5cadde" stroke-width="3.57"/>
<circle cx="962.90" cy="1391.15" r="5.36" fill="#fff" stroke="#5cadde" stroke-width="3.57"/>
<circle cx="993.20" cy="1391.15" r="5.36" fill="#fff" stroke="#5cadde" stroke-width="3.57"/>
<circle cx="1023.50" cy="1391.15" r="5.36" fill="#fff" stroke="#5cadde" stroke-width="3.57"/>
<circle cx="1053.80" cy="1391.15" r="5.36" fill="#fff" stroke="#5cadde" stroke-width="3.57"/>
<circle cx="1144.70" cy="1391.15" r="5.36" fill="#fff" stroke="#5cadde" stroke-width="3.57"/>
<circle cx="1175.00" cy="1391.15" r="5.36" fill="#fff" stroke="#5cadde" stroke-width="3.57"/>
<circle cx="1205.30" cy="1391.15" r="5.36" fill="#fff" stroke="#5cadde" stroke-width="3.57"/>
<circle cx="1235.60" cy="1391.15" r="5.36" fill="#fff" stroke="#5cadde" stroke-width="3.57"/>
<circle cx="1265.90" cy="1391.15" r="5.36" fill="#fff" stroke="#5cadde" stroke-width="3.57"/>
<circle cx="1296.20" cy="1391.15" r="5.36" fill="#fff" stroke="#5cadde" stroke-width="3.57"/>
<circle cx="1326.50" cy="1391.15" r="5.36" fill="#fff" stroke="#5cadde" stroke-width="3.57"/>
<circle cx="1356.80" cy="1391.15" r="5.36" fill="#fff" stroke="#5cadde" stroke-width="3.57"/>
<circle cx="1387.10" cy="1391.15" r="5.36" fill="#fff" stroke="#5cadde" stroke-width="3.57"/>
<circle cx="1417.40" cy="1391.15" r="5.36" fill="#fff" stroke="#5cadde" stroke-width="3.57"/>
<circle cx="1447.70" cy="1391.15" r="5.36" fill="#fff" stroke="#5cadde" stroke-width="3.57"/>
<circle cx="1478.00" cy="1391.15" r="5.36" fill="#fff" stroke="#5cadde" stroke-width="3.57"/>
<circle cx="1508.30" cy="1391.15" r="5.36" fill="#fff" stroke="#5cadde" stroke-width="3.57"/>
<circle cx="1538.60" cy="1391.15" r="5.36" fill="#fff" stroke="#5cadde" stroke-width="3.57"/>
<circle cx="1568.90" cy="1391.15" r="5.36" fill="#fff" stroke="#5cadde" stroke-width="3.57"/>
<circle cx="1599.20" cy="1391.15" r="5.36" fill="#fff" stroke="#5cadde" stroke-width="3.57"/>
<circle cx="1629.50" cy="1391.15" r="5.36" fill="#fff" stroke="#5cadde" stroke-width="3.57"/>
<circle cx="1659.80" cy="1391.15" r="5.36" fill="#fff" stroke="#5cadde" stroke-width="3.57"/>
<circle cx="1690.10" cy="1391.15" r="5.36" fill="#fff" stroke="#5cadde" stroke-width="3.57"/>
<circle cx="1720.40" cy="1391.15" r="5.36" fill="#fff" stroke="#5cadde" stroke-width="3.57"/>
<circle cx="1750.70" cy="1391.15" r="5.36" fill="#fff" stroke="#5cadde" stroke-width="3.57"/>
<circle cx="1781.00" cy="1391.15" r="5.36" fill="#fff" stroke="#5cadde" stroke-width="3.57"/>
<circle cx="1811.30" cy="1391.15" r="5.36" fill="#fff" stroke="#5cadde" stroke-width="3.57"/>
<circle cx="1841.60" cy="1391.15" r="5.36" fill="#fff" stroke="#5cadde" stroke-width="3.57"/>
<circle cx="1871.90" cy="1391.15" r="5.36" fill="#fff" stroke="#5cadde" stroke-width="3.57"/>
<circle cx="1902.20" cy="1391.15" r="5.36" fill="#fff" stroke="#5cadde" stroke-width="3.57"/>
<circle cx="1932.50" cy="1391.15" r="5.36" fill="#fff" stroke="#5cadde" stroke-width="3.57"/>
<circle cx="1962.80" cy="1391.15" r="5.36" fill="#fff" stroke="#5cadde" stroke-width="3.57"/>
<circle cx="1993.10" cy="1391.15" r="5.36" fill="#fff" stroke="#5cadde" stroke-width="3.57"/>
<circle cx="2023.40" cy="1391.15" r="5.36" fill="#fff" stroke="#5cadde" stroke-width="3.57"/>
<circle cx="2053.70" cy="1391.15" r="5.36" fill="#fff" stroke="#5cadde" stroke-width="3.57"/>
<circle cx="2084.00" cy="1391.15" r="5.36" fill="#fff" stroke="#5cadde" stroke-width="3.57"/>
<circle cx="2114.30" cy="1391.15" r="5.36" fill="#fff" stroke="#5cadde" stroke-width="3.57"/>
<circle cx="2144.60" cy="1391.15" r="5.36" fill="#fff" stroke="#5cadde" stroke-width="3.57"/>
<circle cx="2174.90" cy="1391.15" r="5.36" fill="#fff" stroke="#5cadde" stroke-width="3.57"/>
<circle cx="2205.20" cy="1391.15" r="5.36" fill="#fff" stroke="#5cadde" stroke-width="3.57"/>
<circle cx="2235.50" cy="1391.15" r="5.36" fill="#fff" stroke="#5cadde" stroke-width="3.57"/>
<circle cx="2265.80" cy="1391.15" r="5.36" fill="#fff" stroke="#5cadde" stroke-width="3.57"/>
<circle cx="2296.10" cy="1391.15" r="5.36" fill="#fff" stroke="#5cadde" stroke-width="3.57"/>
<circle cx="2326.40" cy="1391.15" r="5.36" fill="#fff" stroke="#5cadde" stroke-width="3.57"/>
<circle cx="2356.70" cy="1391.15" r="5.36" fill="#fff" stroke="#5cadde" stroke-width="3.57"/>
<circle cx="2387.00" cy="1391.15" r="5.36" fill="#fff" stroke="#5cadde" stroke-width="3.57"/>
<circle cx="2417.30" cy="1391.15" r="5.36" fill="#fff" stroke="#5cadde" stroke-width="3.57"/>
<circle cx="2447.60" cy="1391.15" r="5.36" fill="#fff" stroke="#5cadde" stroke-width="3.57"/>
<circle cx="2477.90" cy="1391.15" r="5.36" fill="#fff" stroke="#5cadde" stroke-width="3.57"/>
<circle cx="2508.20" cy="1391.15" r="5.36" fill="#fff" stroke="#5cadde" stroke-width="3.57"/>
<circle cx="2538.50" cy="1391.15" r="5.36" fill="#fff" stroke="#5cadde" stroke-width="3.57"/>
<circle cx="2568.80" cy="1391.15" r="5.36" fill="#fff" stroke="#5cadde" stroke-width="3.57"/>
<circle cx="2599.10" cy="1391.15" r="5.36" fill="#fff" stroke="#5cadde" stroke-width="3.57"/>
<circle cx="2629.40" cy="1391.15" r="5.36" fill="#fff" stroke="#5cadde" stroke-width="3.57"/>
<circle cx="2659.70" cy="1391.15" r="5.36" fill="#fff" stroke="#5cadde" stroke-width="3.57"/>
<circle cx="2690.00" cy="1391.15" r="5.36" fill="#fff" stroke="#5cadde" stroke-width="3.57"/>
<circle cx="2720.30" cy="1391.15" r="5.36" fill="#fff" stroke="#5cadde" stroke-width="3.57"/>
<circle cx="2750.60" cy="1391.15" r="5.36" fill="#fff" stroke="#5cadde" stroke-width="3.57"/>
<circle cx="2780.90" cy="1391.15" r="5.36" fill="#fff" stroke="#5cadde" stroke-width="3.57"/>
<circle cx="2811.20" cy="1391.15" r="5.36" fill="#fff" stroke="#5cadde" stroke-width="3.57"/>
<circle cx="2841.50" cy="1391.15" r="5.36" fill="#fff" stroke="#5cadde" stroke-width="3.57"/>
<circle cx="2871.80" cy="1391.15" r="5.36" fill="#fff" stroke="#5cadde" stroke-width="3.57"/>
<circle cx="2902.10" cy="1391.15" r="5.36" fill="#fff" stroke="#5cadde" stroke-width="3.57"/>
<circle cx="2932.40" cy="1391.15" r="5.36" fill="#fff" stroke="#5cadde" stroke-width="3.57"/>
<circle cx="2962.70" cy="1391.15" r="5.36" fill="#fff" stroke="#5cadde" stroke-width="3.57"/>
<circle cx="2993.00" cy="1391.15" r="5.36" fill="#fff" stroke="#5cadde" stroke-width="3.57"/>
<circle cx="3023.30" cy="1391.15" r="5.36" fill="#fff" stroke="#5cadde" stroke-width="3.57"/>
<circle cx="3053.60" cy="1391.15" r="5.36" fill="#fff" stroke="#5cadde" stroke-width="3.57"/>
<circle cx="3083.90" cy="1391.15" r="5.36" fill="#fff" stroke="#5cadde" stroke-width="3.57"/>
<circle cx="3114.20" cy="1391.15" r="5.36" fill="#fff" stroke="#5cadde" stroke-width="3.57"/>
<circle cx="3144.50" cy="1391.15" r="5.36" fill="#fff" stroke="#5cadde" stroke-width="3.57"/>
<circle cx="3174.80" cy="1391.15" r="5.36" fill="#fff" stroke="#5cadde" stroke-width="3.57"/>
<circle cx="3205.10" cy="1391.15" r="5.36" fill="#fff" stroke="#5cadde" stroke-width="3.57"/>
<circle cx="3235.40" cy="1391.15" r="5.36" fill="#fff" stroke="#5cadde" stroke-width="3.57"/>
<circle cx="3265.70" cy="1391.15" r="5.36" fill="#fff" stroke="#5cadde" stroke-width="3.57"/>
<circle cx="3296.00" cy="1391.15" r="5.36" fill="#fff" stroke="#5cadde" stroke-width="3.57"/>
<circle cx="3326.30" cy="1391.15" r="5.36" fill="#fff" stroke="#5cadde" stroke-width="3.57"/>
<circle cx="3356.60" cy="1391.15" r="5.36" fill="#fff" stroke="#5cadde" stroke-width="3.57"/>
<circle cx="3386.90" cy="1391.15" r="5.36" fill="#fff" stroke="#5cadde" stroke-width="3.57"/>
<path d="M659.90 1610.50 H3386.90" fill="none" stroke="#7a40dc" stroke-width="3.57" stroke-linejoin="round"/>
<circle cx="659.90" cy="1610.50" r="5.36" fill="#fff" stroke="#7a40dc" stroke-width="3.57"/>
<circle cx="690.20" cy="1610.50" r="5.36" fill="#fff" stroke="#7a40dc" stroke-width="3.57"/>
<circle cx="720.50" cy="1610.50" r="5.36" fill="#fff" stroke="#7a40dc" stroke-width="3.57"/>
<circle cx="750.80" cy="1610.50" r="5.36" fill="#fff" stroke="#7a40dc" stroke-width="3.57"/>
<circle cx="781.10" cy="1610.50" r="5.36" fill="#fff" stroke="#7a40dc" stroke-width="3.57"/>
<circle cx="811.40" cy="1610.50" r="5.36" fill="#fff" stroke="#7a40dc" stroke-width="3.57"/>
<circle cx="841.70" cy="1610.50" r="5.36" fill="#fff" stroke="#7a40dc" stroke-width="3.57"/>
<circle cx="872.00" cy="1610.50" r="5.36" fill="#fff" stroke="#7a40dc" stroke-width="3.57"/>
<circle cx="902.30" cy="1610.50" r="5.36" fill="#fff" stroke="#7a40dc" stroke-width="3.57"/>
<circle cx="932.60" cy="1610.50" r="5.36" fill="#fff" stroke="#7a40dc" stroke-width="3.57"/>
<circle cx="962.90" cy="1610.50" r="5.36" fill="#fff" stroke="#7a40dc" stroke-width="3.57"/>
<circle cx="993.20" cy="1610.50" r="5.36" fill="#fff" stroke="#7a40dc" stroke-width="3.57"/>
<circle cx="1023.50" cy="1610.50" r="5.36" fill="#fff" stroke="#7a40dc" stroke-width="3.57"/>
<circle cx="1053.80" cy="1610.50" r="5.36" fill="#fff" stroke="#7a40dc" stroke-width="3.57"/>
<circle cx="1144.70" cy="1610.50" r="5.36" fill="#fff" stroke="#7a40dc" stroke-width="3.57"/>
<circle cx="1175.00" cy="1610.50" r="5.36" fill="#fff" stroke="#7a40dc" stroke-width="3.57"/>
<circle cx="1205.30" cy="1610.50" r="5.36" fill="#fff" stroke="#7a40dc" stroke-width="3.57"/>
<circle cx="1235.60" cy="1610.50" r="5.36" fill="#fff" stroke="#7a40dc" stroke-width="3.57"/>
<circle cx="1265.90" cy="1610.50" r="5.36" fill="#fff" stroke="#7a40dc" stroke-width="3.57"/>
<circle cx="1296.20" cy="1610.50" r="5.36" fill="#fff" stroke="#7a40dc" stroke-width="3.57"/>
<circle cx="1326.50" cy="1610.50" r="5.36" fill="#fff" stroke="#7a40dc" stroke-width="3.57"/>
<circle cx="1356.80" cy="1610.50" r="5.36" fill="#fff" stroke="#7a40dc" stroke-width="3.57"/>
<circle cx="1387.10" cy="1610.50" r="5.36" fill="#fff" stroke="#7a40dc" stroke-width="3.57"/>
<circle cx="1417.40" cy="1610.50" r="5.36" fill="#fff" stroke="#7a40dc" stroke-width="3.57"/>
<circle cx="1447.70" cy="1610.50" r="5.36" fill="#fff" stroke="#7a40dc" stroke-width="3.57"/>
<circle cx="1478.00" cy="1610.50" r="5.36" fill="#fff" stroke="#7a40dc" stroke-width="3.57"/>
<circle cx="1508.30" cy="1610.50" r="5.36" fill="#fff" stroke="#7a40dc" stroke-width="3.57"/>
<circle cx="1538.60" cy="1610.50" r="5.36" fill="#fff" stroke="#7a40dc" stroke-width="3.57"/>
<circle cx="1568.90" cy="1610.50" r="5.36" fill="#fff" stroke="#7a40dc" stroke-width="3.57"/>
<circle cx="1599.20" cy="1610.50" r="5.36" fill="#fff" stroke="#7a40dc" stroke-width="3.57"/>
<circle cx="1629.50" cy="1610.50" r="5.36" fill="#fff" stroke="#7a40dc" stroke-width="3.57"/>
<circle cx="1659.80" cy="1610.50" r="5.36" fill="#fff" stroke="#7a40dc" stroke-width="3.57"/>
<circle cx="1690.10" cy="1610.50" r="5.36" fill="#fff" stroke="#7a40dc" stroke-width="3.57"/>
<circle cx="1720.40" cy="1610.50" r="5.36" fill="#fff" stroke="#7a40dc" stroke-width="3.57"/>
<circle cx="1750.70" cy="1610.50" r="5.36" fill="#fff" stroke="#7a40dc" stroke-width="3.57"/>
<circle cx="1781.00" cy="1610.50" r="5.36" fill="#fff" stroke="#7a40dc" stroke-width="3.57"/>
<circle cx="1811.30" cy="1610.50" r="5.36" fill="#fff" stroke="#7a40dc" stroke-width="3.57"/>
<circle cx="1841.60" cy="1610.50" r="5.36" fill="#fff" stroke="#7a40dc" stroke-width="3.57"/>
<circle cx="1871.90" cy="1610.50" r="5.36" fill="#fff" stroke="#7a40dc" stroke-width="3.57"/>
<circle cx="1902.20" cy="1610.50" r="5.36" fill="#fff" stroke="#7a40dc" stroke-width="3.57"/>
<circle cx="1932.50" cy="1610.50" r="5.36" fill="#fff" stroke="#7a40dc" stroke-width="3.57"/>
<circle cx="1962.80" cy="1610.50" r="5.36" fill="#fff" stroke="#7a40dc" stroke-width="3.57"/>
<circle cx="1993.10" cy="1610.50" r="5.36" fill="#fff" stroke="#7a40dc" stroke-width="3.57"/>
<circle cx="2023.40" cy="1610.50" r="5.36" fill="#fff" stroke="#7a40dc" stroke-width="3.57"/>
<circle cx="2053.70" cy="1610.50" r="5.36" fill="#fff" stroke="#7a40dc" stroke-width="3.57"/>
<circle cx="2084.00" cy="1610.50" r="5.36" fill="#fff" stroke="#7a40dc" stroke-width="3.57"/>
<circle cx="2114.30" cy="1610.50" r="5.36" fill="#fff" stroke="#7a40dc" stroke-width="3.57"/>
<circle cx="2144.60" cy="1610.50" r="5.36" fill="#fff" stroke="#7a40dc" stroke-width="3.57"/>
<circle cx="2174.90" cy="1610.50" r="5.36" fill="#fff" stroke="#7a40dc" stroke-width="3.57"/>
<circle cx="2205.20" cy="1610.50" r="5.36" fill="#fff" stroke="#7a40dc" stroke-width="3.57"/>
<circle cx="2235.50" cy="1610.50" r="5.36" fill="#fff" stroke="#7a40dc" stroke-width="3.57"/>
<circle cx="2265.80" cy="1610.50" r="5.36" fill="#fff" stroke="#7a40dc" stroke-width="3.57"/>
<circle cx="2296.10" cy="1610.50" r="5.36" fill="#fff" stroke="#7a40dc" stroke-width="3.57"/>
<circle cx="2326.40" cy="1610.50" r="5.36" fill="#fff" stroke="#7a40dc" stroke-width="3.57"/>
<circle cx="2356.70" cy="1610.50" r="5.36" fill="#fff" stroke="#7a40dc" stroke-width="3.57"/>
<circle cx="2387.00" cy="1610.50" r="5.36" fill="#fff" stroke="#7a40dc" stroke-width="3.57"/>
<circle cx="2417.30" cy="1610.50" r="5.36" fill="#fff" stroke="#7a40dc" stroke-width="3.57"/>
<circle cx="2447.60" cy="1610.50" r="5.36" fill="#fff" stroke="#7a40dc" stroke-width="3.57"/>
<circle cx="2477.90" cy="1610.50" r="5.36" fill="#fff" stroke="#7a40dc" stroke-width="3.57"/>
<circle cx="2508.20" cy="1610.50" r="5.36" fill="#fff" stroke="#7a40dc" stroke-width="3.57"/>
<circle cx="2538.50" cy="1610.50" r="5.36" fill="#fff" stroke="#7a40dc" stroke-width="3.57"/>
<circle cx="2568.80" cy="1610.50" r="5.36" fill="#fff" stroke="#7a40dc" stroke-width="3.57"/>
<circle cx="2599.10" cy="1610.50" r="5.36" fill="#fff" stroke="#7a40dc" stroke-width="3.57"/>
<circle cx="2629.40" cy="1610.50" r="5.36" fill="#fff" stroke="#7a40dc" stroke-width="3.57"/>
<circle cx="2659.70" cy="1610.50" r="5.36" fill="#fff" stroke="#7a40dc" stroke-width="3.57"/>
<circle cx="2690.00" cy="1610.50" r="5.36" fill="#fff" stroke="#7a40dc" stroke-width="3.57"/>
<circle cx="2720.30" cy="1610.50" r="5.36" fill="#fff" stroke="#7a40dc" stroke-width="3.57"/>
<circle cx="2750.60" cy="1610.50" r="5.36" fill="#fff" stroke="#7a40dc" stroke-width="3.57"/>
<circle cx="2780.90" cy="1610.50" r="5.36" fill="#fff" stroke="#7a40dc" stroke-width="3.57"/>
<circle cx="2811.20" cy="1610.50" r="5.36" fill="#fff" stroke="#7a40dc" stroke-width="3.57"/>
<circle cx="2841.50" cy="1610.50" r="5.36" fill="#fff" stroke="#7a40dc" stroke-width="3.57"/>
<circle cx="2871.80" cy="1610.50" r="5.36" fill="#fff" stroke="#7a40dc" stroke-width="3.57"/>
<circle cx="2902.10" cy="1610.50" r="5.36" fill="#fff" stroke="#7a40dc" stroke-width="3.57"/>
<circle cx="2932.40" cy="1610.50" r="5.36" fill="#fff" stroke="#7a40dc" stroke-width="3.57"/>
<circle cx="2962.70" cy="1610.50" r="5.36" fill="#fff" stroke="#7a40dc" stroke-width="3.57"/>
<circle cx="2993.00" cy="1610.50" r="5.36" fill="#fff" stroke="#7a40dc" stroke-width="3.57"/>
<circle cx="3023.30" cy="1610.50" r="5.36" fill="#fff" stroke="#7a40dc" stroke-width="3.57"/>
<circle cx="3053.60" cy="1610.50" r="5.36" fill="#fff" stroke="#7a40dc" stroke-width="3.57"/>
<circle cx="3083.90" cy="1610.50" r="5.36" fill="#fff" stroke="#7a40dc" stroke-width="3.57"/>
<circle cx="3114.20" cy="1610.50" r="5.36" fill="#fff" stroke="#7a40dc" stroke-width="3.57"/>
<circle cx="3144.50" cy="1610.50" r="5.36" fill="#fff" stroke="#7a40dc" stroke-width="3.57"/>
<circle cx="3174.80" cy="1610.50" r="5.36" fill="#fff" stroke="#7a40dc" stroke-width="3.57"/>
<circle cx="3205.10" cy="1610.50" r="5.36" fill="#fff" stroke="#7a40dc" stroke-width="3.57"/>
<circle cx="3235.40" cy="1610.50" r="5.36" fill="#fff" stroke="#7a40dc" stroke-width="3.57"/>
<circle cx="3265.70" cy="1610.50" r="5.36" fill="#fff" stroke="#7a40dc" stroke-width="3.57"/>
<circle cx="3296.00" cy="1610.50" r="5.36" fill="#fff" stroke="#7a40dc" stroke-width="3.57"/>
<circle cx="3326.30" cy="1610.50" r="5.36" fill="#fff" stroke="#7a40dc" stroke-width="3.57"/>
<circle cx="3356.60" cy="1610.50" r="5.36" fill="#fff" stroke="#7a40dc" stroke-width="3.57"/>
<circle cx="3386.90" cy="1610.50" r="5.36" fill="#fff" stroke="#7a40dc" stroke-width="3.57"/>
<path d="M659.90 453.25 H3386.90" fill="none" stroke="#d9345b" stroke-width="3.57" stroke-linejoin="round"/>
<circle cx="659.90" cy="453.25" r="5.36" fill="#fff" stroke="#d9345b" stroke-width="3.57"/>
<circle cx="690.20" cy="453.25" r="5.36" fill="#fff" stroke="#d9345b" stroke-width="3.57"/>
<circle cx="720.50" cy="453.25" r="5.36" fill="#fff" stroke="#d9345b" stroke-width="3.57"/>
<circle cx="750.80" cy="453.25" r="5.36" fill="#fff" stroke="#d9345b" stroke-width="3.57"/>
<circle cx="781.10" cy="453.25" r="5.36" fill="#fff" stroke="#d9345b" stroke-width="3.57"/>
<circle cx="811.40" cy="453.25" r="5.36" fill="#fff" stroke="#d9345b" stroke-width="3.57"/>
<circle cx="841.70" cy="453.25" r="5.36" fill="#fff" stroke="#d9345b" stroke-width="3.57"/>
<circle cx="872.00" cy="453.25" r="5.36" fill="#fff" stroke="#d9345b" stroke-width="3.57"/>
<circle cx="902.30" cy="453.25" r="5.36" fill="#fff" stroke="#d9345b" stroke-width="3.57"/>
<circle cx="932.60" cy="453.25" r="5.36" fill="#fff" stroke="#d9345b" stroke-width="3.57"/>
<circle cx="962.90" cy="453.25" r="5.36" fill="#fff" stroke="#d9345b" stroke-width="3.57"/>
<circle cx="993.20" cy="453.25" r="5.36" fill="#fff" stroke="#d9345b" stroke-width="3.57"/>
<circle cx="1023.50" cy="453.25" r="5.36" fill="#fff" stroke="#d9345b" stroke-width="3.57"/>
<circle cx="1053.80" cy="453.25" r="5.36" fill="#fff" stroke="#d9345b" stroke-width="3.57"/>
<circle cx="1144.70" cy="453.25" r="5.36" fill="#fff" stroke="#d9345b" stroke-width="3.57"/>
<circle cx="1175.00" cy="453.25" r="5.36" fill="#fff" stroke="#d9345b" stroke-width="3.57"/>
<circle cx="1205.30" cy="453.25" r="5.36" fill="#fff" stroke="#d9345b" stroke-width="3.57"/>
<circle cx="1235.60" cy="453.25" r="5.36" fill="#fff" stroke="#d9345b" stroke-width="3.57"/>
<circle cx="1265.90" cy="453.25" r="5.36" fill="#fff" stroke="#d9345b" stroke-width="3.57"/>
<circle cx="1296.20" cy="453.25" r="5.36" fill="#fff" stroke="#d9345b" stroke-width="3.57"/>
<circle cx="1326.50" cy="453.25" r="5.36" fill="#fff" stroke="#d9345b" stroke-width="3.57"/>
<circle cx="1356.80" cy="453.25" r="5.36" fill="#fff" stroke="#d9345b" stroke-width="3.57"/>
<circle cx="1387.10" cy="453.25" r="5.36" fill="#fff" stroke="#d9345b" stroke-width="3.57"/>
<circle cx="1417.40" cy="453.25" r="5.36" fill="#fff" stroke="#d9345b" stroke-width="3.57"/>
<circle cx="1447.70" cy="453.25" r="5.36" fill="#fff" stroke="#d9345b" stroke-width="3.57"/>
<circle cx="1478.00" cy="453.25" r="5.36" fill="#fff" stroke="#d9345b" stroke-width="3.57"/>
<circle cx="1508.30" cy="453.25" r="5.36" fill="#fff" stroke="#d9345b" stroke-width="3.57"/>
<circle cx="1538.60" cy="453.25" r="5.36" fill="#fff" stroke="#d9345b" stroke-width="3.57"/>
<circle cx="1568.90" cy="453.25" r="5.36" fill="#fff" stroke="#d9345b" stroke-width="3.57"/>
<circle cx="1599.20" cy="453.25" r="5.36" fill="#fff" stroke="#d9345b" stroke-width="3.57"/>
<circle cx="1629.50" cy="453.25" r="5.36" fill="#fff" stroke="#d9345b" stroke-width="3.57"/>
<circle cx="1659.80" cy="453.25" r="5.36" fill="#fff" stroke="#d9345b" stroke-width="3.57"/>
<circle cx="1690.10" cy="453.25" r="5.36" fill="#fff" stroke="#d9345b" stroke-width="3.57"/>
<circle cx="1720.40" cy="453.25" r="5.36" fill="#fff" stroke="#d9345b" stroke-width="3.57"/>
<circle cx="1750.70" cy="453.25" r="5.36" fill="#fff" stroke="#d9345b" stroke-width="3.57"/>
<circle cx="1781.00" cy="453.25" r="5.36" fill="#fff" stroke="#d9345b" stroke-width="3.57"/>
<circle cx="1811.30" cy="453.25" r="5.36" fill="#fff" stroke="#d9345b" stroke-width="3.57"/>
<circle cx="1841.60" cy="453.25" r="5.36" fill="#fff" stroke="#d9345b" stroke-width="3.57"/>
<circle cx="1871.90" cy="453.25" r="5.36" fill="#fff" stroke="#d9345b" stroke-width="3.57"/>
<circle cx="1902.20" cy="453.25" r="5.36" fill="#fff" stroke="#d9345b" stroke-width="3.57"/>
<circle cx="1932.50" cy="453.25" r="5.36" fill="#fff" stroke="#d9345b" stroke-width="3.57"/>
<circle cx="1962.80" cy="453.25" r="5.36" fill="#fff" stroke="#d9345b" stroke-width="3.57"/>
<circle cx="1993.10" cy="453.25" r="5.36" fill="#fff" stroke="#d9345b" stroke-width="3.57"/>
<circle cx="2023.40" cy="453.25" r="5.36" fill="#fff" stroke="#d9345b" stroke-width="3.57"/>
<circle cx="2053.70" cy="453.25" r="5.36" fill="#fff" stroke="#d9345b" stroke-width="3.57"/>
<circle cx="2084.00" cy="453.25" r="5.36" fill="#fff" stroke="#d9345b" stroke-width="3.57"/>
<circle cx="2114.30" cy="453.25" r="5.36" fill="#fff" stroke="#d9345b" stroke-width="3.57"/>
<circle cx="2144.60" cy="453.25" r="5.36" fill="#fff" stroke="#d9345b" stroke-width="3.57"/>
<circle cx="2174.90" cy="453.25" r="5.36" fill="#fff" stroke="#d9345b" stroke-width="3.57"/>
<circle cx="2205.20" cy="453.25" r="5.36" fill="#fff" stroke="#d9345b" stroke-width="3.57"/>
<circle cx="2235.50" cy="453.25" r="5.36" fill="#fff" stroke="#d9345b" stroke-width="3.57"/>
<circle cx="2265.80" cy="453.25" r="5.36" fill="#fff" stroke="#d9345b" stroke-width="3.57"/>
<circle cx="2296.10" cy="453.25" r="5.36" fill="#fff" stroke="#d9345b" stroke-width="3.57"/>
<circle cx="2326.40" cy="453.25" r="5.36" fill="#fff" stroke="#d9345b" stroke-width="3.57"/>
<circle cx="2356.70" cy="453.25" r="5.36" fill="#fff" stroke="#d9345b" stroke-width="3.57"/>
<circle cx="2387.00" cy="453.25" r="5.36" fill="#fff" stroke="#d9345b" stroke-width="3.57"/>
<circle cx="2417.30" cy="453.25" r="5.36" fill="#fff" stroke="#d9345b" stroke-width="3.57"/>
<circle cx="2447.60" cy="453.25" r="5.36" fill="#fff" stroke="#d9345b" stroke-width="3.57"/>
<circle cx="2477.90" cy="453.25" r="5.36" fill="#fff" stroke="#d9345b" stroke-width="3.57"/>
<circle cx="2508.20" cy="453.25" r="5.36" fill="#fff" stroke="#d9345b" stroke-width="3.57"/>
<circle cx="2538.50" cy="453.25" r="5.36" fill="#fff" stroke="#d9345b" stroke-width="3.57"/>
<circle cx="2568.80" cy="453.25" r="5.36" fill="#fff" stroke="#d9345b" stroke-width="3.57"/>
<circle cx="2599.10" cy="453.25" r="5.36" fill="#fff" stroke="#d9345b" stroke-width="3.57"/>
<circle cx="2629.40" cy="453.25" r="5.36" fill="#fff" stroke="#d9345b" stroke-width="3.57"/>
<circle cx="2659.70" cy="453.25" r="5.36" fill="#fff" stroke="#d9345b" stroke-width="3.57"/>
<circle cx="2690.00" cy="453.25" r="5.36" fill="#fff" stroke="#d9345b" stroke-width="3.57"/>
<circle cx="2720.30" cy="453.25" r="5.36" fill="#fff" stroke="#d9345b" stroke-width="3.57"/>
<circle cx="2750.60" cy="453.25" r="5.36" fill="#fff" stroke="#d9345b" stroke-width="3.57"/>
<circle cx="2780.90" cy="453.25" r="5.36" fill="#fff" stroke="#d9345b" stroke-width="3.57"/>
<circle cx="2811.20" cy="453.25" r="5.36" fill="#fff" stroke="#d9345b" stroke-width="3.57"/>
<circle cx="2841.50" cy="453.25" r="5.36" fill="#fff" stroke="#d9345b" stroke-width="3.57"/>
<circle cx="2871.80" cy="453.25" r="5.36" fill="#fff" stroke="#d9345b" stroke-width="3.57"/>
<circle cx="2902.10" cy="453.25" r="5.36" fill="#fff" stroke="#d9345b" stroke-width="3.57"/>
<circle cx="2932.40" cy="453.25" r="5.36" fill="#fff" stroke="#d9345b" stroke-width="3.57"/>
<circle cx="2962.70" cy="453.25" r="5.36" fill="#fff" stroke="#d9345b" stroke-width="3.57"/>
<circle cx="2993.00" cy="453.25" r="5.36" fill="#fff" stroke="#d9345b" stroke-width="3.57"/>
<circle cx="3023.30" cy="453.25" r="5.36" fill="#fff" stroke="#d9345b" stroke-width="3.57"/>
<circle cx="3053.60" cy="453.25" r="5.36" fill="#fff" stroke="#d9345b" stroke-width="3.57"/>
<circle cx="3083.90" cy="453.25" r="5.36" fill="#fff" stroke="#d9345b" stroke-width="3.57"/>
<circle cx="3114.20" cy="453.25" r="5.36" fill="#fff" stroke="#d9345b" stroke-width="3.57"/>
<circle cx="3144.50" cy="453.25" r="5.36" fill="#fff" stroke="#d9345b" stroke-width="3.57"/>
<circle cx="3174.80" cy="453.25" r="5.36" fill="#fff" stroke="#d9345b" stroke-width="3.57"/>
<circle cx="3205.10" cy="453.25" r="5.36" fill="#fff" stroke="#d9345b" stroke-width="3.57"/>
<circle cx="3235.40" cy="453.25" r="5.36" fill="#fff" stroke="#d9345b" stroke-width="3.57"/>
<circle cx="3265.70" cy="453.25" r="5.36" fill="#fff" stroke="#d9345b" stroke-width="3.57"/>
<circle cx="3296.00" cy="453.25" r="5.36" fill="#fff" stroke="#d9345b" stroke-width="3.57"/>
<circle cx="3326.30" cy="453.25" r="5.36" fill="#fff" stroke="#d9345b" stroke-width="3.57"/>
<circle cx="3356.60" cy="453.25" r="5.36" fill="#fff" stroke="#d9345b" stroke-width="3.57"/>
<circle cx="3386.90" cy="453.25" r="5.36" fill="#fff" stroke="#d9345b" stroke-width="3.57"/>
<path d="M659.90 1512.17 H3386.90" fill="none" stroke="#b03a82" stroke-width="3.57" stroke-linejoin="round"/>
<circle cx="659.90" cy="1512.17" r="5.36" fill="#fff" stroke="#b03a82" stroke-width="3.57"/>
<circle cx="690.20" cy="1512.17" r="5.36" fill="#fff" stroke="#b03a82" stroke-width="3.57"/>
<circle cx="720.50" cy="1512.17" r="5.36" fill="#fff" stroke="#b03a82" stroke-width="3.57"/>
<circle cx="750.80" cy="1512.17" r="5.36" fill="#fff" stroke="#b03a82" stroke-width="3.57"/>
<circle cx="781.10" cy="1512.17" r="5.36" fill="#fff" stroke="#b03a82" stroke-width="3.57"/>
<circle cx="811.40" cy="1512.17" r="5.36" fill="#fff" stroke="#b03a82" stroke-width="3.57"/>
<circle cx="841.70" cy="1512.17" r="5.36" fill="#fff" stroke="#b03a82" stroke-width="3.57"/>
<circle cx="872.00" cy="1512.17" r="5.36" fill="#fff" stroke="#b03a82" stroke-width="3.57"/>
<circle cx="902.30" cy="1512.17" r="5.36" fill="#fff" stroke="#b03a82" stroke-width="3.57"/>
<circle cx="932.60" cy="1512.17" r="5.36" fill="#fff" stroke="#b03a82" stroke-width="3.57"/>
<circle cx="962.90" cy="1512.17" r="5.36" fill="#fff" stroke="#b03a82" stroke-width="3.57"/>
<circle cx="993.20" cy="1512.17" r="5.36" fill="#fff" stroke="#b03a82" stroke-width="3.57"/>
<circle cx="1023.50" cy="1512.17" r="5.36" fill="#fff" stroke="#b03a82" stroke-width="3.57"/>
<circle cx="1053.80" cy="1512.17" r="5.36" fill="#fff" stroke="#b03a82" stroke-width="3.57"/>
<circle cx="1144.70" cy="1512.17" r="5.36" fill="#fff" stroke="#b03a82" stroke-width="3.57"/>
<circle cx="1175.00" cy="1512.17" r="5.36" fill="#fff" stroke="#b03a82" stroke-width="3.57"/>
<circle cx="1205.30" cy="1512.17" r="5.36" fill="#fff" stroke="#b03a82" stroke-width="3.57"/>
<circle cx="1235.60" cy="1512.17" r="5.36" fill="#fff" stroke="#b03a82" stroke-width="3.57"/>
<circle cx="1265.90" cy="1512.17" r="5.36" fill="#fff" stroke="#b03a82" stroke-width="3.57"/>
<circle cx="1296.20" cy="1512.17" r="5.36" fill="#fff" stroke="#b03a82" stroke-width="3.57"/>
<circle cx="1326.50" cy="1512.17" r="5.36" fill="#fff" stroke="#b03a82" stroke-width="3.57"/>
<circle cx="1356.80" cy="1512.17" r="5.36" fill="#fff" stroke="#b03a82" stroke-width="3.57"/>
<circle cx="1387.10" cy="1512.17" r="5.36" fill="#fff" stroke="#b03a82" stroke-width="3.57"/>
<circle cx="1417.40" cy="1512.17" r="5.36" fill="#fff" stroke="#b03a82" stroke-width="3.57"/>
<circle cx="1447.70" cy="1512.17" r="5.36" fill="#fff" stroke="#b03a82" stroke-width="3.57"/>
<circle cx="1478.00" cy="1512.17" r="5.36" fill="#fff" stroke="#b03a82" stroke-width="3.57"/>
<circle cx="1508.30" cy="1512.17" r="5.36" fill="#fff" stroke="#b03a82" stroke-width="3.57"/>
<circle cx="1538.60" cy="1512.17" r="5.36" fill="#fff" stroke="#b03a82" stroke-width="3.57"/>
<circle cx="1568.90" cy="1512.17" r="5.36" fill="#fff" stroke="#b03a82" stroke-width="3.57"/>
<circle cx="1599.20" cy="1512.17" r="5.36" fill="#fff" stroke="#b03a82" stroke-width="3.57"/>
<circle cx="1629.50" cy="1512.17" r="5.36" fill="#fff" stroke="#b03a82" stroke-width="3.57"/>
<circle cx="1659.80" cy="1512.17" r="5.36" fill="#fff" stroke="#b03a82" stroke-width="3.57"/>
<circle cx="1690.10" cy="1512.17" r="5.36" fill="#fff" stroke="#b03a82" stroke-width="3.57"/>
<circle cx="1720.40" cy="1512.17" r="5.36" fill="#fff" stroke="#b03a82" stroke-width="3.57"/>
<circle cx="1750.70" cy="1512.17" r="5.36" fill="#fff" stroke="#b03a82" stroke-width="3.57"/>
<circle cx="1781.00" cy="1512.17" r="5.36" fill="#fff" stroke="#b03a82" stroke-width="3.57"/>
<circle cx="1811.30" cy="1512.17" r="5.36" fill="#fff" stroke="#b03a82" stroke-width="3.57"/>
<circle cx="1841.60" cy="1512.17" r="5.36" fill="#fff" stroke="#b03a82" stroke-width="3.57"/>
<circle cx="1871.90" cy="1512.17" r="5.36" fill="#fff" stroke="#b03a82" stroke-width="3.57"/>
<circle cx="1902.20" cy="1512.17" r="5.36" fill="#fff" stroke="#b03a82" stroke-width="3.57"/>
<circle cx="1932.50" cy="1512.17" r="5.36" fill="#fff" stroke="#b03a82" stroke-width="3.57"/>
<circle cx="1962.80" cy="1512.17" r="5.36" fill="#fff" stroke="#b03a82" stroke-width="3.57"/>
<circle cx="1993.10" cy="1512.17" r="5.36" fill="#fff" stroke="#b03a82" stroke-width="3.57"/>
<circle cx="2023.40" cy="1512.17" r="5.36" fill="#fff" stroke="#b03a82" stroke-width="3.57"/>
<circle cx="2053.70" cy="1512.17" r="5.36" fill="#fff" stroke="#b03a82" stroke-width="3.57"/>
<circle cx="2084.00" cy="1512.17" r="5.36" fill="#fff" stroke="#b03a82" stroke-width="3.57"/>
<circle cx="2114.30" cy="1512.17" r="5.36" fill="#fff" stroke="#b03a82" stroke-width="3.57"/>
<circle cx="2144.60" cy="1512.17" r="5.36" fill="#fff" stroke="#b03a82" stroke-width="3.57"/>
<circle cx="2174.90" cy="1512.17" r="5.36" fill="#fff" stroke="#b03a82" stroke-width="3.57"/>
<circle cx="2205.20" cy="1512.17" r="5.36" fill="#fff" stroke="#b03a82" stroke-width="3.57"/>
<circle cx="2235.50" cy="1512.17" r="5.36" fill="#fff" stroke="#b03a82" stroke-width="3.57"/>
<circle cx="2265.80" cy="1512.17" r="5.36" fill="#fff" stroke="#b03a82" stroke-width="3.57"/>
<circle cx="2296.10" cy="1512.17" r="5.36" fill="#fff" stroke="#b03a82" stroke-width="3.57"/>
<circle cx="2326.40" cy="1512.17" r="5.36" fill="#fff" stroke="#b03a82" stroke-width="3.57"/>
<circle cx="2356.70" cy="1512.17" r="5.36" fill="#fff" stroke="#b03a82" stroke-width="3.57"/>
<circle cx="2387.00" cy="1512.17" r="5.36" fill="#fff" stroke="#b03a82" stroke-width="3.57"/>
<circle cx="2417.30" cy="1512.17" r="5.36" fill="#fff" stroke="#b03a82" stroke-width="3.57"/>
<circle cx="2447.60" cy="1512.17" r="5.36" fill="#fff" stroke="#b03a82" stroke-width="3.57"/>
<circle cx="2477.90" cy="1512.17" r="5.36" fill="#fff" stroke="#b03a82" stroke-width="3.57"/>
<circle cx="2508.20" cy="1512.17" r="5.36" fill="#fff" stroke="#b03a82" stroke-width="3.57"/>
<circle cx="2538.50" cy="1512.17" r="5.36" fill="#fff" stroke="#b03a82" stroke-width="3.57"/>
<circle cx="2568.80" cy="1512.17" r="5.36" fill="#fff" stroke="#b03a82" stroke-width="3.57"/>
<circle cx="2599.10" cy="1512.17" r="5.36" fill="#fff" stroke="#b03a82" stroke-width="3.57"/>
<circle cx="2629.40" cy="1512.17" r="5.36" fill="#fff" stroke="#b03a82" stroke-width="3.57"/>
<circle cx="2659.70" cy="1512.17" r="5.36" fill="#fff" stroke="#b03a82" stroke-width="3.57"/>
<circle cx="2690.00" cy="1512.17" r="5.36" fill="#fff" stroke="#b03a82" stroke-width="3.57"/>
<circle cx="2720.30" cy="1512.17" r="5.36" fill="#fff" stroke="#b03a82" stroke-width="3.57"/>
<circle cx="2750.60" cy="1512.17" r="5.36" fill="#fff" stroke="#b03a82" stroke-width="3.57"/>
<circle cx="2780.90" cy="1512.17" r="5.36" fill="#fff" stroke="#b03a82" stroke-width="3.57"/>
<circle cx="2811.20" cy="1512.17" r="5.36" fill="#fff" stroke="#b03a82" stroke-width="3.57"/>
<circle cx="2841.50" cy="1512.17" r="5.36" fill="#fff" stroke="#b03a82" stroke-width="3.57"/>
<circle cx="2871.80" cy="1512.17" r="5.36" fill="#fff" stroke="#b03a82" stroke-width="3.57"/>
<circle cx="2902.10" cy="1512.17" r="5.36" fill="#fff" stroke="#b03a82" stroke-width="3.57"/>
<circle cx="2932.40" cy="1512.17" r="5.36" fill="#fff" stroke="#b03a82" stroke-width="3.57"/>
<circle cx="2962.70" cy="1512.17" r="5.36" fill="#fff" stroke="#b03a82" stroke-width="3.57"/>
<circle cx="2993.00" cy="1512.17" r="5.36" fill="#fff" stroke="#b03a82" stroke-width="3.57"/>
<circle cx="3023.30" cy="1512.17" r="5.36" fill="#fff" stroke="#b03a82" stroke-width="3.57"/>
<circle cx="3053.60" cy="1512.17" r="5.36" fill="#fff" stroke="#b03a82" stroke-width="3.57"/>
<circle cx="3083.90" cy="1512.17" r="5.36" fill="#fff" stroke="#b03a82" stroke-width="3.57"/>
<circle cx="3114.20" cy="1512.17" r="5.36" fill="#fff" stroke="#b03a82" stroke-width="3.57"/>
<circle cx="3144.50" cy="1512.17" r="5.36" fill="#fff" stroke="#b03a82" stroke-width="3.57"/>
<circle cx="3174.80" cy="1512.17" r="5.36" fill="#fff" stroke="#b03a82" stroke-width="3.57"/>
<circle cx="3205.10" cy="1512.17" r="5.36" fill="#fff" stroke="#b03a82" stroke-width="3.57"/>
<circle cx="3235.40" cy="1512.17" r="5.36" fill="#fff" stroke="#b03a82" stroke-width="3.57"/>
<circle cx="3265.70" cy="1512.17" r="5.36" fill="#fff" stroke="#b03a82" stroke-width="3.57"/>
<circle cx="3296.00" cy="1512.17" r="5.36" fill="#fff" stroke="#b03a82" stroke-width="3.57"/>
<circle cx="3326.30" cy="1512.17" r="5.36" fill="#fff" stroke="#b03a82" stroke-width="3.57"/>
<circle cx="3356.60" cy="1512.17" r="5.36" fill="#fff" stroke="#b03a82" stroke-width="3.57"/>
<circle cx="3386.90" cy="1512.17" r="5.36" fill="#fff" stroke="#b03a82" stroke-width="3.57"/>
<path d="M659.90 1209.62 H2356.70 C2366.80 1209.62 2376.90 1224.75 2387.00 1224.75 H3386.90" fill="none" stroke="#822128" stroke-width="3.57" stroke-linejoin="round"/>
<circle cx="659.90" cy="1209.62" r="5.36" fill="#fff" stroke="#822128" stroke-width="3.57"/>
<circle cx="690.20" cy="1209.62" r="5.36" fill="#fff" stroke="#822128" stroke-width="3.57"/>
<circle cx="720.50" cy="1209.62" r="5.36" fill="#fff" stroke="#822128" stroke-width="3.57"/>
<circle cx="750.80" cy="1209.62" r="5.36" fill="#fff" stroke="#822128" stroke-width="3.57"/>
<circle cx="781.10" cy="1209.62" r="5.36" fill="#fff" stroke="#822128" stroke-width="3.57"/>
<circle cx="811.40" cy="1209.62" r="5.36" fill="#fff" stroke="#822128" stroke-width="3.57"/>
<circle cx="841.70" cy="1209.62" r="5.36" fill="#fff" stroke="#822128" stroke-width="3.57"/>
<circle cx="872.00" cy="1209.62" r="5.36" fill="#fff" stroke="#822128" stroke-width="3.57"/>
<circle cx="902.30" cy="1209.62" r="5.36" fill="#fff" stroke="#822128" stroke-width="3.57"/>
<circle cx="932.60" cy="1209.62" r="5.36" fill="#fff" stroke="#822128" stroke-width="3.57"/>
<circle cx="962.90" cy="1209.62" r="5.36" fill="#fff" stroke="#822128" stroke-width="3.57"/>
<circle cx="993.20" cy="1209.62" r="5.36" fill="#fff" stroke="#822128" stroke-width="3.57"/>
<circle cx="1023.50" cy="1209.62" r="5.36" fill="#fff" stroke="#822128" stroke-width="3.57"/>
<circle cx="1053.80" cy="1209.62" r="5.36" fill="#fff" stroke="#822128" stroke-width="3.57"/>
<circle cx="1144.70" cy="1209.62" r="5.36" fill="#fff" stroke="#822128" stroke-width="3.57"/>
<circle cx="1175.00" cy="1209.62" r="5.36" fill="#fff" stroke="#822128" stroke-width="3.57"/>
<circle cx="1205.30" cy="1209.62" r="5.36" fill="#fff" stroke="#822128" stroke-width="3.57"/>
<circle cx="1235.60" cy="1209.62" r="5.36" fill="#fff" stroke="#822128" stroke-width="3.57"/>
<circle cx="1265.90" cy="1209.62" r="5.36" fill="#fff" stroke="#822128" stroke-width="3.57"/>
<circle cx="1296.20" cy="1209.62" r="5.36" fill="#fff" stroke="#822128" stroke-width="3.57"/>
<circle cx="1326.50" cy="1209.62" r="5.36" fill="#fff" stroke="#822128" stroke-width="3.57"/>
<circle cx="1356.80" cy="1209.62" r="5.36" fill="#fff" stroke="#822128" stroke-width="3.57"/>
<circle cx="1387.10" cy="1209.62" r="5.36" fill="#fff" stroke="#822128" stroke-width="3.57"/>
<circle cx="1417.40" cy="1209.62" r="5.36" fill="#fff" stroke="#822128" stroke-width="3.57"/>
<circle cx="1447.70" cy="1209.62" r="5.36" fill="#fff" stroke="#822128" stroke-width="3.57"/>
<circle cx="1478.00" cy="1209.62" r="5.36" fill="#fff" stroke="#822128" stroke-width="3.57"/>
<circle cx="1508.30" cy="1209.62" r="5.36" fill="#fff" stroke="#822128" stroke-width="3.57"/>
<circle cx="1538.60" cy="1209.62" r="5.36" fill="#fff" stroke="#822128" stroke-width="3.57"/>
<circle cx="1568.90" cy="1209.62" r="5.36" fill="#fff" stroke="#822128" stroke-width="3.57"/>
<circle cx="1599.20" cy="1209.62" r="5.36" fill="#fff" stroke="#822128" stroke-width="3.57"/>
<circle cx="1629.50" cy="1209.62" r="5.36" fill="#fff" stroke="#822128" stroke-width="3.57"/>
<circle cx="1659.80" cy="1209.62" r="5.36" fill="#fff" stroke="#822128" stroke-width="3.57"/>
<circle cx="1690.10" cy="1209.62" r="5.36" fill="#fff" stroke="#822128" stroke-width="3.57"/>
<circle cx="1720.40" cy="1209.62" r="5.36" fill="#fff" stroke="#822128" stroke-width="3.57"/>
<circle cx="1750.70" cy="1209.62" r="5.36" fill="#fff" stroke="#822128" stroke-width="3.57"/>
<circle cx="1781.00" cy="1209.62" r="5.36" fill="#fff" stroke="#822128" stroke-width="3.57"/>
<circle cx="1811.30" cy="1209.62" r="5.36" fill="#fff" stroke="#822128" stroke-width="3.57"/>
<circle cx="1841.60" cy="1209.62" r="5.36" fill="#fff" stroke="#822128" stroke-width="3.57"/>
<circle cx="1871.90" cy="1209.62" r="5.36" fill="#fff" stroke="#822128" stroke-width="3.57"/>
<circle cx="1902.20" cy="1209.62" r="5.36" fill="#fff" stroke="#822128" stroke-width="3.57"/>
<circle cx="1932.50" cy="1209.62" r="5.36" fill="#fff" stroke="#822128" stroke-width="3.57"/>
<circle cx="1962.80" cy="1209.62" r="5.36" fill="#fff" stroke="#822128" stroke-width="3.57"/>
<circle cx="1993.10" cy="1209.62" r="5.36" fill="#fff" stroke="#822128" stroke-width="3.57"/>
<circle cx="2023.40" cy="1209.62" r="5.36" fill="#fff" stroke="#822128" stroke-width="3.57"/>
<circle cx="2053.70" cy="1209.62" r="5.36" fill="#fff" stroke="#822128" stroke-width="3.57"/>
<circle cx="2084.00" cy="1209.62" r="5.36" fill="#fff" stroke="#822128" stroke-width="3.57"/>
<circle cx="2114.30" cy="1209.62" r="5.36" fill="#fff" stroke="#822128" stroke-width="3.57"/>
<circle cx="2144.60" cy="1209.62" r="5.36" fill="#fff" stroke="#822128" stroke-width="3.57"/>
<circle cx="2174.90" cy="1209.62" r="5.36" fill="#fff" stroke="#822128" stroke-width="3.57"/>
<circle cx="2205.20" cy="1209.62" r="5.36" fill="#fff" stroke="#822128" stroke-width="3.57"/>
<circle cx="2235.50" cy="1209.62" r="5.36" fill="#fff" stroke="#822128" stroke-width="3.57"/>
<circle cx="2265.80" cy="1209.62" r="5.36" fill="#fff" stroke="#822128" stroke-width="3.57"/>
<circle cx="2296.10" cy="1209.62" r="5.36" fill="#fff" stroke="#822128" stroke-width="3.57"/>
<circle cx="2326.40" cy="1209.62" r="5.36" fill="#fff" stroke="#822128" stroke-width="3.57"/>
<circle cx="2356.70" cy="1209.62" r="5.36" fill="#fff" stroke="#822128" stroke-width="3.57"/>
<circle cx="2387.00" cy="1224.75" r="5.36" fill="#fff" stroke="#822128" stroke-width="3.57"/>
<circle cx="2417.30" cy="1224.75" r="5.36" fill="#fff" stroke="#822128" stroke-width="3.57"/>
<circle cx="2447.60" cy="1224.75" r="5.36" fill="#fff" stroke="#822128" stroke-width="3.57"/>
<circle cx="2477.90" cy="1224.75" r="5.36" fill="#fff" stroke="#822128" stroke-width="3.57"/>
<circle cx="2508.20" cy="1224.75" r="5.36" fill="#fff" stroke="#822128" stroke-width="3.57"/>
<circle cx="2538.50" cy="1224.75" r="5.36" fill="#fff" stroke="#822128" stroke-width="3.57"/>
<circle cx="2568.80" cy="1224.75" r="5.36" fill="#fff" stroke="#822128" stroke-width="3.57"/>
<circle cx="2599.10" cy="1224.75" r="5.36" fill="#fff" stroke="#822128" stroke-width="3.57"/>
<circle cx="2629.40" cy="1224.75" r="5.36" fill="#fff" stroke="#822128" stroke-width="3.57"/>
<circle cx="2659.70" cy="1224.75" r="5.36" fill="#fff" stroke="#822128" stroke-width="3.57"/>
<circle cx="2690.00" cy="1224.75" r="5.36" fill="#fff" stroke="#822128" stroke-width="3.57"/>
<circle cx="2720.30" cy="1224.75" r="5.36" fill="#fff" stroke="#822128" stroke-width="3.57"/>
<circle cx="2750.60" cy="1224.75" r="5.36" fill="#fff" stroke="#822128" stroke-width="3.57"/>
<circle cx="2780.90" cy="1224.75" r="5.36" fill="#fff" stroke="#822128" stroke-width="3.57"/>
<circle cx="2811.20" cy="1224.75" r="5.36" fill="#fff" stroke="#822128" stroke-width="3.57"/>
<circle cx="2841.50" cy="1224.75" r="5.36" fill="#fff" stroke="#822128" stroke-width="3.57"/>
<circle cx="2871.80" cy="1224.75" r="5.36" fill="#fff" stroke="#822128" stroke-width="3.57"/>
<circle cx="2902.10" cy="1224.75" r="5.36" fill="#fff" stroke="#822128" stroke-width="3.57"/>
<circle cx="2932.40" cy="1224.75" r="5.36" fill="#fff" stroke="#822128" stroke-width="3.57"/>
<circle cx="2962.70" cy="1224.75" r="5.36" fill="#fff" stroke="#822128" stroke-width="3.57"/>
<circle cx="2993.00" cy="1224.75" r="5.36" fill="#fff" stroke="#822128" stroke-width="3.57"/>
<circle cx="3023.30" cy="1224.75" r="5.36" fill="#fff" stroke="#822128" stroke-width="3.57"/>
<circle cx="3053.60" cy="1224.75" r="5.36" fill="#fff" stroke="#822128" stroke-width="3.57"/>
<circle cx="3083.90" cy="1224.75" r="5.36" fill="#fff" stroke="#822128" stroke-width="3.57"/>
<circle cx="3114.20" cy="1224.75" r="5.36" fill="#fff" stroke="#822128" stroke-width="3.57"/>
<circle cx="3144.50" cy="1224.75" r="5.36" fill="#fff" stroke="#822128" stroke-width="3.57"/>
<circle cx="3174.80" cy="1224.75" r="5.36" fill="#fff" stroke="#822128" stroke-width="3.57"/>
<circle cx="3205.10" cy="1224.75" r="5.36" fill="#fff" stroke="#822128" stroke-width="3.57"/>
<circle cx="3235.40" cy="1224.75" r="5.36" fill="#fff" stroke="#822128" stroke-width="3.57"/>
<circle cx="3265.70" cy="1224.75" r="5.36" fill="#fff" stroke="#822128" stroke-width="3.57"/>
<circle cx="3296.00" cy="1224.75" r="5.36" fill="#fff" stroke="#822128" stroke-width="3.57"/>
<circle cx="3326.30" cy="1224.75" r="5.36" fill="#fff" stroke="#822128" stroke-width="3.57"/>
<circle cx="3356.60" cy="1224.75" r="5.36" fill="#fff" stroke="#822128" stroke-width="3.57"/>
<circle cx="3386.90" cy="1224.75" r="5.36" fill="#fff" stroke="#822128" stroke-width="3.57"/>
<line x1="1285" y1="1720.5" x2="1310" y2="1720.5" stroke="#b5a544" stroke-width="3.5"/><circle cx="1297.5" cy="1720.5" r="4.2" fill="#fff" stroke="#b5a544" stroke-width="3.5"/>
<text x="1317.5" y="1728.5" font-size="25" fill="#b5a544" textLength="160.5" lengthAdjust="spacing">Custom Fields</text>
<line x1="1496" y1="1720.5" x2="1521" y2="1720.5" stroke="#2d72e8" stroke-width="3.5"/><circle cx="1508.5" cy="1720.5" r="4.2" fill="#fff" stroke="#2d72e8" stroke-width="3.5"/>
<text x="1529" y="1728.5" font-size="25" fill="#2d72e8" textLength="233.0" lengthAdjust="spacing">Issue Type Schemes</text>
<line x1="1780" y1="1720.5" x2="1805" y2="1720.5" stroke="#5cadde" stroke-width="3.5"/><circle cx="1792.5" cy="1720.5" r="4.2" fill="#fff" stroke="#5cadde" stroke-width="3.5"/>
<text x="1813" y="1728.5" font-size="25" fill="#5cadde" textLength="133.5" lengthAdjust="spacing">Issue Types</text>
<line x1="1965" y1="1720.5" x2="1990" y2="1720.5" stroke="#7a40dc" stroke-width="3.5"/><circle cx="1977.5" cy="1720.5" r="4.2" fill="#fff" stroke="#7a40dc" stroke-width="3.5"/>
<text x="1997" y="1728.5" font-size="25" fill="#7a40dc" textLength="91.0" lengthAdjust="spacing">Projects</text>
<line x1="2106" y1="1720.5" x2="2131" y2="1720.5" stroke="#d9345b" stroke-width="3.5"/><circle cx="2118.5" cy="1720.5" r="4.2" fill="#fff" stroke="#d9345b" stroke-width="3.5"/>
<text x="2139" y="1728.5" font-size="25" fill="#d9345b" textLength="65.0" lengthAdjust="spacing">Users</text>
<line x1="2222.5" y1="1720.5" x2="2247.5" y2="1720.5" stroke="#b03a82" stroke-width="3.5"/><circle cx="2235.0" cy="1720.5" r="4.2" fill="#fff" stroke="#b03a82" stroke-width="3.5"/>
<text x="2255" y="1728.5" font-size="25" fill="#b03a82" textLength="214.5" lengthAdjust="spacing">Workflow Schemes</text>
<line x1="2488.5" y1="1720.5" x2="2513.5" y2="1720.5" stroke="#822128" stroke-width="3.5"/><circle cx="2501.0" cy="1720.5" r="4.2" fill="#fff" stroke="#822128" stroke-width="3.5"/>
<text x="2520" y="1728.5" font-size="25" fill="#822128" textLength="115.5" lengthAdjust="spacing">Workflows</text></svg>
</div></body></html>
